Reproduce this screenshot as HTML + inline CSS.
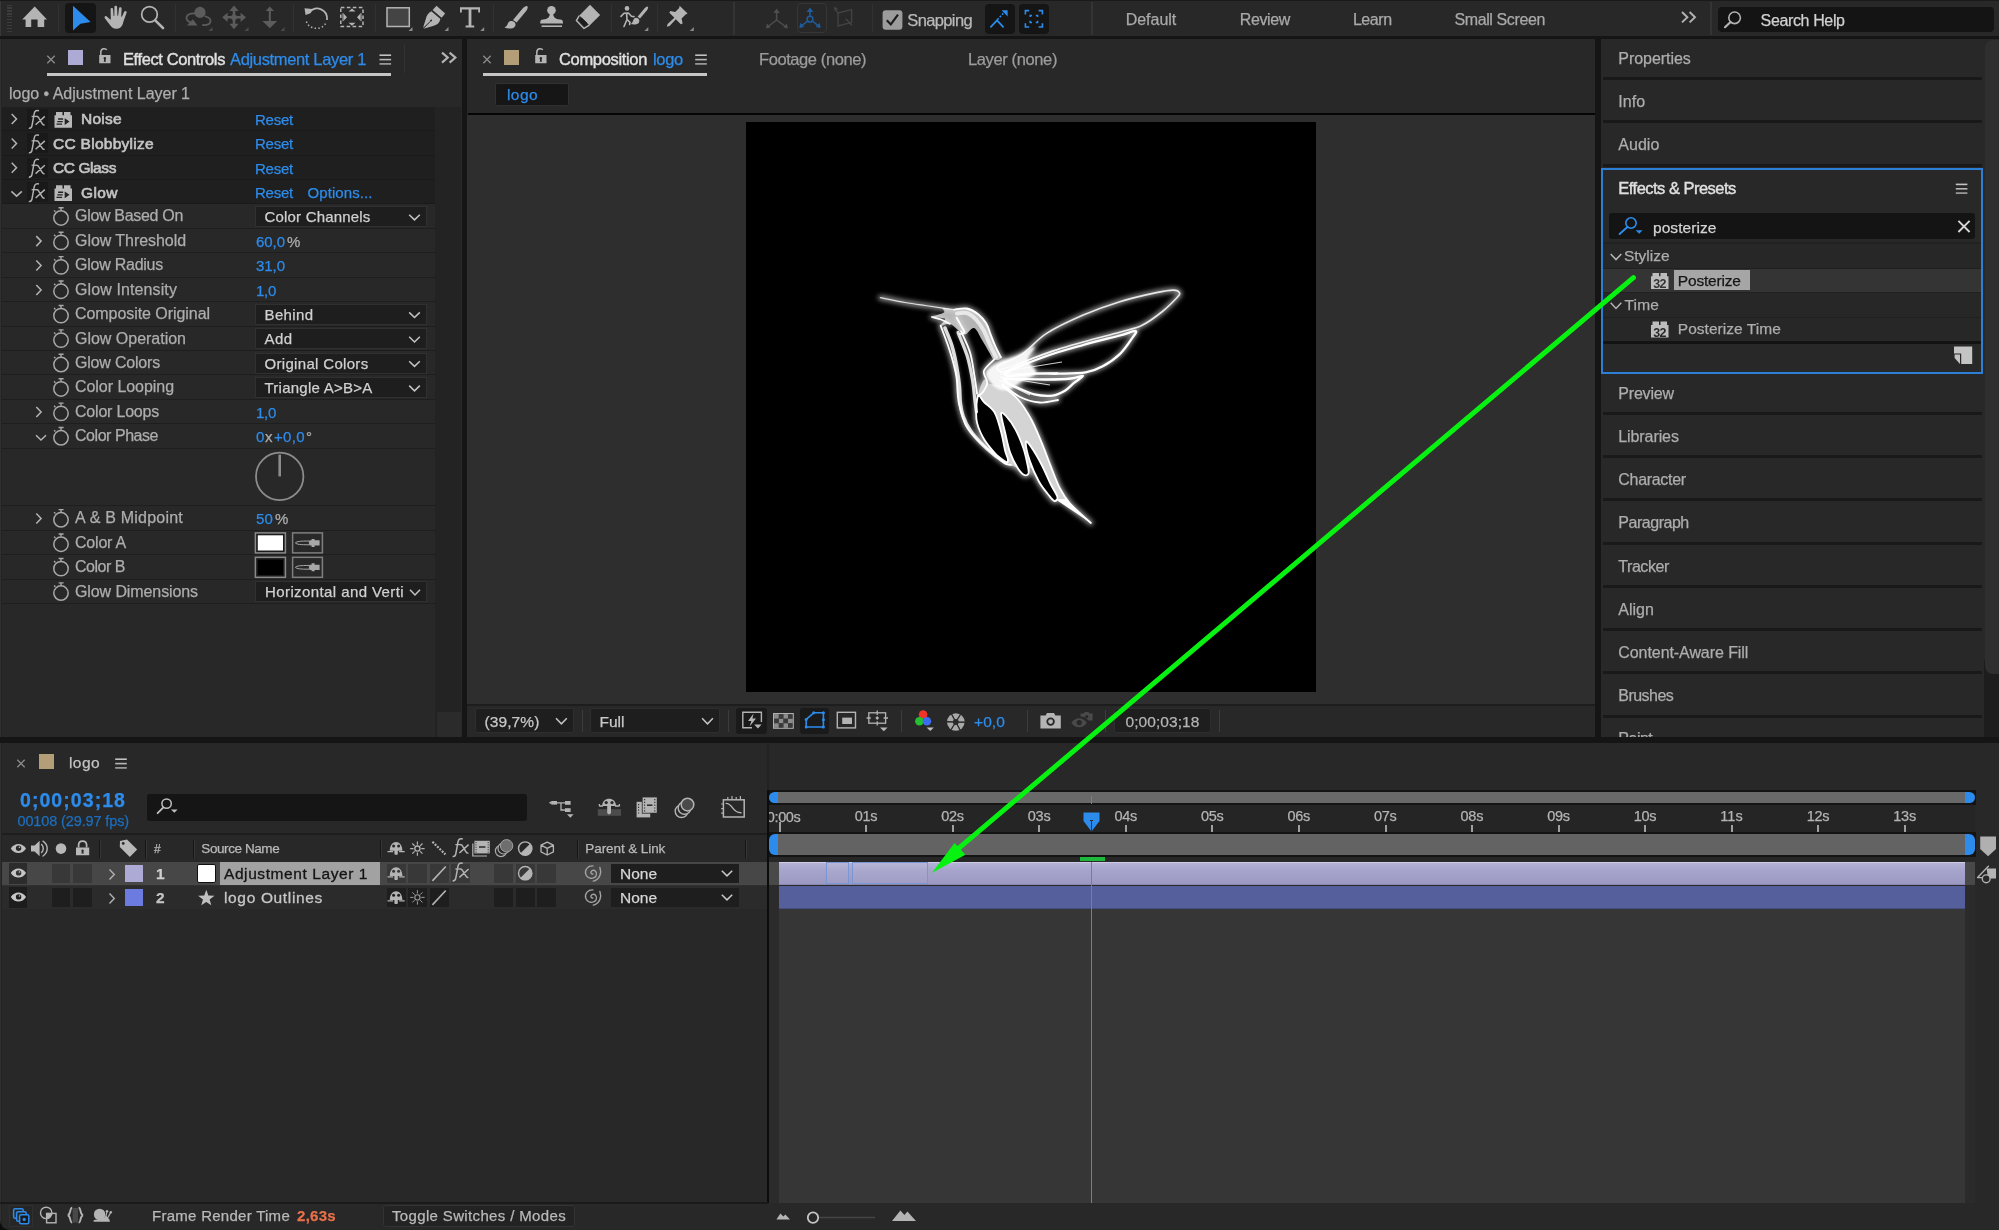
<!DOCTYPE html>
<html><head><meta charset="utf-8"><title>AE</title>
<style>
html,body{margin:0;padding:0;background:#151515;}
body{width:1999px;height:1230px;position:relative;overflow:hidden;font-family:"Liberation Sans", sans-serif;}
#w>div,#w>span,#w>svg{position:absolute;display:block;}
span{white-space:pre;-webkit-text-stroke:0.25px;}
#w{position:absolute;left:0;top:0;width:1999px;height:1230px;will-change:transform;}
svg{overflow:visible;}
</style></head><body><div id="w">
<div style="left:0px;top:0px;width:1999px;height:36px;background:#282828;"></div>
<div style="left:0px;top:0px;width:1999px;height:1px;background:#1a1a1a;"></div>
<div style="left:0px;top:39px;width:462px;height:699px;background:#282828;"></div>
<div style="left:467px;top:39px;width:1128px;height:699px;background:#282828;"></div>
<div style="left:1600px;top:39px;width:399px;height:699px;background:#282828;"></div>
<div style="left:0px;top:743px;width:1999px;height:487px;background:#282828;"></div>
<div style="left:68px;top:50px;width:15px;height:15px;background:#aeaad6;"></div>
<span style="left:123px;top:50.83px;font-size:16.5px;line-height:16.5px;color:#e0e0e0;letter-spacing:-0.395px;-webkit-text-stroke:0.4px;">Effect Controls</span>
<span style="left:230px;top:50.83px;font-size:16.5px;line-height:16.5px;color:#2d8ceb;letter-spacing:-0.343px;">Adjustment Layer 1</span>
<div style="left:47px;top:73px;width:344px;height:3px;background:#c6c6c6;"></div>
<div style="left:404px;top:45px;width:1px;height:28px;background:#333;"></div>
<span style="left:9px;top:85.76px;font-size:16px;line-height:16px;color:#adadad;letter-spacing:-0.029px;">logo • Adjustment Layer 1</span>
<div style="left:0px;top:107px;width:435px;height:24px;background:#1f1f1f;"></div>
<div style="left:0px;top:130px;width:435px;height:1px;background:#1a1a1a;"></div>
<div style="left:0px;top:131px;width:435px;height:25px;background:#1f1f1f;"></div>
<div style="left:0px;top:155px;width:435px;height:1px;background:#1a1a1a;"></div>
<div style="left:0px;top:156px;width:435px;height:24px;background:#1f1f1f;"></div>
<div style="left:0px;top:179px;width:435px;height:1px;background:#1a1a1a;"></div>
<div style="left:0px;top:180px;width:435px;height:24px;background:#1f1f1f;"></div>
<div style="left:0px;top:203px;width:435px;height:1px;background:#1a1a1a;"></div>
<div style="left:435px;top:107px;width:26px;height:631px;background:#232323;"></div>
<div style="left:437px;top:712px;width:24px;height:26px;background:#2b2b2b;"></div>
<div style="left:27px;top:109px;width:21px;height:20px;background:#191919;"></div>
<span style="left:81px;top:111.39px;font-size:15.5px;line-height:15.5px;color:#c3c3c3;letter-spacing:0.272px;-webkit-text-stroke:0.65px;">Noise</span>
<span style="left:255px;top:111.81px;font-size:15px;line-height:15px;color:#2d8ceb;letter-spacing:-0.237px;">Reset</span>
<div style="left:27px;top:133px;width:21px;height:20px;background:#191919;"></div>
<span style="left:53px;top:135.81px;font-size:15.5px;line-height:15.5px;color:#c3c3c3;letter-spacing:0.280px;-webkit-text-stroke:0.65px;">CC Blobbylize</span>
<span style="left:255px;top:136.23px;font-size:15px;line-height:15px;color:#2d8ceb;letter-spacing:-0.237px;">Reset</span>
<div style="left:27px;top:158px;width:21px;height:20px;background:#191919;"></div>
<span style="left:53px;top:160.23px;font-size:15.5px;line-height:15.5px;color:#c3c3c3;letter-spacing:-0.416px;-webkit-text-stroke:0.65px;">CC Glass</span>
<span style="left:255px;top:160.65px;font-size:15px;line-height:15px;color:#2d8ceb;letter-spacing:-0.237px;">Reset</span>
<div style="left:27px;top:182px;width:21px;height:20px;background:#191919;"></div>
<span style="left:81px;top:184.65px;font-size:15.5px;line-height:15.5px;color:#c3c3c3;letter-spacing:0.418px;-webkit-text-stroke:0.65px;">Glow</span>
<span style="left:255px;top:185.07px;font-size:15px;line-height:15px;color:#2d8ceb;letter-spacing:-0.237px;">Reset</span>
<span style="left:307.5px;top:185.07px;font-size:15px;line-height:15px;color:#2d8ceb;letter-spacing:0.080px;">Options...</span>
<div style="left:0px;top:228px;width:435px;height:1px;background:#1e1e1e;"></div>
<span style="left:75px;top:208.45px;font-size:16px;line-height:16px;color:#adadad;letter-spacing:-0.312px;">Glow Based On</span>
<div style="left:255px;top:206px;width:172px;height:21px;background:#1e1e1e;border:1px solid #303030;box-sizing:border-box;"></div>
<span style="left:264.5px;top:209.29px;font-size:15px;line-height:15px;color:#d0d0d0;letter-spacing:0.186px;">Color Channels</span>
<div style="left:0px;top:252px;width:435px;height:1px;background:#1e1e1e;"></div>
<span style="left:75px;top:232.87px;font-size:16px;line-height:16px;color:#adadad;letter-spacing:-0.055px;">Glow Threshold</span>
<span style="left:256px;top:233.71px;font-size:15px;line-height:15px;color:#2d8ceb;letter-spacing:-0.051px;">60,0</span>
<span style="left:287px;top:233.71px;font-size:15px;line-height:15px;color:#adadad;letter-spacing:-1.344px;">%</span>
<div style="left:0px;top:277px;width:435px;height:1px;background:#1e1e1e;"></div>
<span style="left:75px;top:257.29px;font-size:16px;line-height:16px;color:#adadad;letter-spacing:-0.246px;">Glow Radius</span>
<span style="left:256px;top:258.13px;font-size:15px;line-height:15px;color:#2d8ceb;letter-spacing:-0.051px;">31,0</span>
<div style="left:0px;top:301px;width:435px;height:1px;background:#1e1e1e;"></div>
<span style="left:75px;top:281.71px;font-size:16px;line-height:16px;color:#adadad;letter-spacing:0.108px;">Glow Intensity</span>
<span style="left:256px;top:282.55px;font-size:15px;line-height:15px;color:#2d8ceb;letter-spacing:-0.286px;">1,0</span>
<div style="left:0px;top:326px;width:435px;height:1px;background:#1e1e1e;"></div>
<span style="left:75px;top:306.13px;font-size:16px;line-height:16px;color:#adadad;letter-spacing:-0.059px;">Composite Original</span>
<div style="left:255px;top:304px;width:172px;height:21px;background:#1e1e1e;border:1px solid #303030;box-sizing:border-box;"></div>
<span style="left:264.5px;top:306.97px;font-size:15px;line-height:15px;color:#d0d0d0;letter-spacing:0.380px;">Behind</span>
<div style="left:0px;top:350px;width:435px;height:1px;background:#1e1e1e;"></div>
<span style="left:75px;top:330.55px;font-size:16px;line-height:16px;color:#adadad;letter-spacing:-0.012px;">Glow Operation</span>
<div style="left:255px;top:328px;width:172px;height:21px;background:#1e1e1e;border:1px solid #303030;box-sizing:border-box;"></div>
<span style="left:264.5px;top:331.39px;font-size:15px;line-height:15px;color:#d0d0d0;letter-spacing:0.432px;">Add</span>
<div style="left:0px;top:374px;width:435px;height:1px;background:#1e1e1e;"></div>
<span style="left:75px;top:354.97px;font-size:16px;line-height:16px;color:#adadad;letter-spacing:-0.195px;">Glow Colors</span>
<div style="left:255px;top:353px;width:172px;height:21px;background:#1e1e1e;border:1px solid #303030;box-sizing:border-box;"></div>
<span style="left:264.5px;top:355.81px;font-size:15px;line-height:15px;color:#d0d0d0;letter-spacing:0.320px;">Original Colors</span>
<div style="left:0px;top:399px;width:435px;height:1px;background:#1e1e1e;"></div>
<span style="left:75px;top:379.39px;font-size:16px;line-height:16px;color:#adadad;letter-spacing:-0.048px;">Color Looping</span>
<div style="left:255px;top:377px;width:172px;height:21px;background:#1e1e1e;border:1px solid #303030;box-sizing:border-box;"></div>
<span style="left:264.5px;top:380.23px;font-size:15px;line-height:15px;color:#d0d0d0;letter-spacing:0.249px;">Triangle A>B>A</span>
<div style="left:0px;top:423px;width:435px;height:1px;background:#1e1e1e;"></div>
<span style="left:75px;top:403.81px;font-size:16px;line-height:16px;color:#adadad;letter-spacing:-0.207px;">Color Loops</span>
<span style="left:256px;top:404.65px;font-size:15px;line-height:15px;color:#2d8ceb;letter-spacing:-0.286px;">1,0</span>
<div style="left:0px;top:448px;width:435px;height:1px;background:#1e1e1e;"></div>
<span style="left:75px;top:428.23px;font-size:16px;line-height:16px;color:#adadad;letter-spacing:-0.459px;">Color Phase</span>
<span style="left:256px;top:429.07px;font-size:15px;line-height:15px;color:#2d8ceb;letter-spacing:-0.344px;">0</span>
<span style="left:265px;top:429.07px;font-size:15px;line-height:15px;color:#adadad;letter-spacing:0.500px;">x</span>
<span style="left:274px;top:429.07px;font-size:15px;line-height:15px;color:#2d8ceb;letter-spacing:0.344px;">+0,0</span>
<span style="left:306px;top:429.07px;font-size:15px;line-height:15px;color:#adadad;">°</span>
<div style="left:0px;top:505px;width:435px;height:1px;background:#1e1e1e;"></div>
<div style="left:0px;top:530px;width:435px;height:1px;background:#1e1e1e;"></div>
<span style="left:75px;top:510.25px;font-size:16px;line-height:16px;color:#adadad;letter-spacing:0.218px;">A &amp; B Midpoint</span>
<span style="left:256px;top:511.09px;font-size:15px;line-height:15px;color:#2d8ceb;letter-spacing:0.156px;">50</span>
<span style="left:275px;top:511.09px;font-size:15px;line-height:15px;color:#adadad;letter-spacing:-1.344px;">%</span>
<div style="left:0px;top:554px;width:435px;height:1px;background:#1e1e1e;"></div>
<span style="left:75px;top:534.67px;font-size:16px;line-height:16px;color:#adadad;letter-spacing:-0.210px;">Color A</span>
<div style="left:0px;top:579px;width:435px;height:1px;background:#1e1e1e;"></div>
<span style="left:75px;top:559.09px;font-size:16px;line-height:16px;color:#adadad;letter-spacing:-0.480px;">Color B</span>
<div style="left:0px;top:603px;width:435px;height:1px;background:#1e1e1e;"></div>
<span style="left:75px;top:583.51px;font-size:16px;line-height:16px;color:#adadad;letter-spacing:-0.099px;">Glow Dimensions</span>
<div style="left:255px;top:581px;width:172px;height:21px;background:#1e1e1e;border:1px solid #303030;box-sizing:border-box;"></div>
<span style="left:265px;top:584.35px;font-size:15px;line-height:15px;color:#d0d0d0;letter-spacing:0.405px;">Horizontal and Verti</span>
<div style="left:1595px;top:39px;width:5px;height:699px;background:#151515;"></div>
<div style="left:504px;top:50px;width:15px;height:15px;background:#b39e78;"></div>
<span style="left:559px;top:50.83px;font-size:16.5px;line-height:16.5px;color:#e0e0e0;letter-spacing:-0.338px;-webkit-text-stroke:0.4px;">Composition</span>
<span style="left:653px;top:50.83px;font-size:16.5px;line-height:16.5px;color:#2d8ceb;letter-spacing:-0.301px;">logo</span>
<div style="left:483px;top:73px;width:224px;height:3px;background:#c6c6c6;"></div>
<span style="left:759px;top:50.83px;font-size:16.5px;line-height:16.5px;color:#9c9c9c;letter-spacing:-0.416px;">Footage (none)</span>
<span style="left:968px;top:50.83px;font-size:16.5px;line-height:16.5px;color:#9c9c9c;letter-spacing:-0.380px;">Layer (none)</span>
<div style="left:495px;top:83px;width:74px;height:23px;background:#161616;border:1px solid #303030;box-sizing:border-box;border-radius:2px;"></div>
<span style="left:507px;top:86.88px;font-size:15.5px;line-height:15.5px;color:#2d8ceb;letter-spacing:0.422px;">logo</span>
<div style="left:468px;top:113px;width:1127px;height:2px;background:#050505;"></div>
<div style="left:467px;top:115px;width:1128px;height:589px;background:#2e2e2e;"></div>
<div style="left:746px;top:122px;width:570px;height:570px;background:#000;"></div>
<div style="left:467px;top:704px;width:1128px;height:2px;background:#1d1d1d;"></div>
<div style="left:475px;top:708px;width:99px;height:25px;background:#1e1e1e;border:1px solid #2e2e2e;box-sizing:border-box;border-radius:3px;"></div>
<span style="left:484.5px;top:714.18px;font-size:15.5px;line-height:15.5px;color:#c8c8c8;letter-spacing:0.103px;">(39,7%)</span>
<div style="left:582px;top:710px;width:1px;height:22px;background:#3c3c3c;"></div>
<div style="left:590px;top:708px;width:130px;height:25px;background:#1e1e1e;border:1px solid #2e2e2e;box-sizing:border-box;border-radius:3px;"></div>
<span style="left:599.5px;top:714.18px;font-size:15.5px;line-height:15.5px;color:#c8c8c8;letter-spacing:0.004px;">Full</span>
<div style="left:728px;top:710px;width:1px;height:22px;background:#3c3c3c;"></div>
<div style="left:736px;top:708px;width:31px;height:26px;background:#1a1a1a;border-radius:3px;"></div>
<div style="left:800px;top:708px;width:29px;height:26px;background:#1a1a1a;border-radius:3px;"></div>
<div style="left:901px;top:710px;width:1px;height:22px;background:#3c3c3c;"></div>
<span style="left:974px;top:714.18px;font-size:15.5px;line-height:15.5px;color:#2d8ceb;letter-spacing:0.098px;">+0,0</span>
<div style="left:1027px;top:710px;width:1px;height:22px;background:#3c3c3c;"></div>
<div style="left:1105px;top:710px;width:1px;height:22px;background:#3c3c3c;"></div>
<div style="left:1114px;top:708px;width:97px;height:25px;background:#1e1e1e;border:1px solid #2e2e2e;box-sizing:border-box;border-radius:3px;"></div>
<span style="left:1125.5px;top:714.18px;font-size:15.5px;line-height:15.5px;color:#b4b4b4;letter-spacing:0.073px;">0;00;03;18</span>
<div style="left:1219px;top:710px;width:1px;height:22px;background:#3c3c3c;"></div>
<div style="left:1600px;top:39px;width:1px;height:699px;background:#151515;"></div>
<div style="left:1984px;top:660px;width:15px;height:78px;background:#1d1d1d;"></div>
<div style="left:1984.5px;top:40px;width:15px;height:634px;background:#2f2f2f;border-radius:8px 0 0 8px;"></div>
<span style="left:1618.3px;top:50.56px;font-size:16px;line-height:16px;color:#adadad;letter-spacing:-0.042px;">Properties</span>
<div style="left:1603px;top:77px;width:379px;height:3px;background:#191919;"></div>
<span style="left:1618.3px;top:93.76px;font-size:16px;line-height:16px;color:#adadad;letter-spacing:0.078px;">Info</span>
<div style="left:1603px;top:120px;width:379px;height:3px;background:#191919;"></div>
<span style="left:1618.3px;top:136.96px;font-size:16px;line-height:16px;color:#adadad;letter-spacing:0.016px;">Audio</span>
<div style="left:1603px;top:164px;width:379px;height:3px;background:#191919;"></div>
<div style="left:1601px;top:168px;width:382px;height:206px;background:#282828;border:2px solid #2d7fd6;box-sizing:border-box;"></div>
<span style="left:1618.3px;top:180.03px;font-size:16.5px;line-height:16.5px;color:#e0e0e0;letter-spacing:-0.515px;-webkit-text-stroke:0.4px;">Effects &amp; Presets</span>
<div style="left:1609px;top:213px;width:366px;height:26px;background:#141414;border-radius:3px;"></div>
<span style="left:1653px;top:219.58px;font-size:15.5px;line-height:15.5px;color:#d4d4d4;letter-spacing:0.066px;">posterize</span>
<div style="left:1603px;top:242px;width:378px;height:2px;background:#222222;"></div>
<div style="left:1603px;top:244px;width:378px;height:24px;background:#272727;"></div>
<div style="left:1603px;top:268px;width:378px;height:1px;background:#202020;"></div>
<div style="left:1603px;top:269px;width:378px;height:23px;background:#343434;"></div>
<div style="left:1603px;top:292px;width:378px;height:1px;background:#202020;"></div>
<div style="left:1603px;top:293px;width:378px;height:24px;background:#272727;"></div>
<div style="left:1603px;top:317px;width:378px;height:1px;background:#202020;"></div>
<div style="left:1603px;top:318px;width:378px;height:24px;background:#272727;"></div>
<div style="left:1603px;top:341px;width:378px;height:3px;background:#131313;"></div>
<span style="left:1624px;top:248.38px;font-size:15.5px;line-height:15.5px;color:#adadad;letter-spacing:-0.022px;">Stylize</span>
<div style="left:1674px;top:270px;width:76px;height:20px;background:#a6a6a6;"></div>
<span style="left:1677.8px;top:272.68px;font-size:15.5px;line-height:15.5px;color:#161616;letter-spacing:-0.181px;">Posterize</span>
<span style="left:1624.5px;top:296.88px;font-size:15.5px;line-height:15.5px;color:#adadad;letter-spacing:0.156px;">Time</span>
<span style="left:1677.8px;top:321.38px;font-size:15.5px;line-height:15.5px;color:#adadad;letter-spacing:0.035px;">Posterize Time</span>
<span style="left:1618.3px;top:385.66px;font-size:16px;line-height:16px;color:#adadad;letter-spacing:-0.201px;">Preview</span>
<div style="left:1603px;top:412px;width:379px;height:3px;background:#191919;"></div>
<span style="left:1618.3px;top:428.88px;font-size:16px;line-height:16px;color:#adadad;letter-spacing:-0.095px;">Libraries</span>
<div style="left:1603px;top:455px;width:379px;height:3px;background:#191919;"></div>
<span style="left:1618.3px;top:472.10px;font-size:16px;line-height:16px;color:#adadad;letter-spacing:-0.306px;">Character</span>
<div style="left:1603px;top:498px;width:379px;height:3px;background:#191919;"></div>
<span style="left:1618.3px;top:515.32px;font-size:16px;line-height:16px;color:#adadad;letter-spacing:-0.469px;">Paragraph</span>
<div style="left:1603px;top:542px;width:379px;height:3px;background:#191919;"></div>
<span style="left:1618.3px;top:558.54px;font-size:16px;line-height:16px;color:#adadad;letter-spacing:-0.449px;">Tracker</span>
<div style="left:1603px;top:585px;width:379px;height:3px;background:#191919;"></div>
<span style="left:1618.3px;top:601.76px;font-size:16px;line-height:16px;color:#adadad;letter-spacing:-0.016px;">Align</span>
<div style="left:1603px;top:628px;width:379px;height:3px;background:#191919;"></div>
<span style="left:1618.3px;top:644.98px;font-size:16px;line-height:16px;color:#adadad;letter-spacing:-0.073px;">Content-Aware Fill</span>
<div style="left:1603px;top:671px;width:379px;height:3px;background:#191919;"></div>
<span style="left:1618.3px;top:688.20px;font-size:16px;line-height:16px;color:#adadad;letter-spacing:-0.529px;">Brushes</span>
<div style="left:1603px;top:715px;width:379px;height:3px;background:#191919;"></div>
<span style="left:1618.3px;top:731.42px;font-size:16px;line-height:16px;color:#adadad;letter-spacing:-0.494px;">Paint</span>
<div style="left:0px;top:737px;width:1999px;height:6px;background:#151515;"></div>
<div style="left:0px;top:743px;width:1999px;height:487px;background:#282828;"></div>
<div style="left:39px;top:754px;width:15px;height:15px;background:#b39e78;"></div>
<span style="left:69px;top:755.18px;font-size:15.5px;line-height:15.5px;color:#c4c4c4;letter-spacing:0.422px;">logo</span>
<span style="left:20px;top:791.29px;font-size:19.5px;line-height:19.5px;color:#2d8ceb;font-weight:700;letter-spacing:1.059px;">0;00;03;18</span>
<span style="left:17.5px;top:814.23px;font-size:14.5px;line-height:14.5px;color:#1c6fbd;letter-spacing:-0.128px;">00108 (29.97 fps)</span>
<div style="left:147px;top:794px;width:380px;height:27px;background:#151515;border-radius:3px;"></div>
<div style="left:0px;top:833px;width:768px;height:2px;background:#1d1d1d;"></div>
<div style="left:99px;top:841px;width:1px;height:16px;background:#1a1a1a;"></div>
<div style="left:100px;top:841px;width:1px;height:16px;background:#3a3a3a;"></div>
<div style="left:99px;top:840px;width:1px;height:18px;background:#161616;"></div>
<div style="left:100px;top:840px;width:1px;height:18px;background:#363636;"></div>
<div style="left:145px;top:840px;width:1px;height:18px;background:#161616;"></div>
<div style="left:146px;top:840px;width:1px;height:18px;background:#363636;"></div>
<div style="left:193px;top:840px;width:1px;height:18px;background:#161616;"></div>
<div style="left:194px;top:840px;width:1px;height:18px;background:#363636;"></div>
<div style="left:380px;top:840px;width:1px;height:18px;background:#161616;"></div>
<div style="left:381px;top:840px;width:1px;height:18px;background:#363636;"></div>
<div style="left:577px;top:840px;width:1px;height:18px;background:#161616;"></div>
<div style="left:578px;top:840px;width:1px;height:18px;background:#363636;"></div>
<div style="left:745px;top:840px;width:1px;height:18px;background:#161616;"></div>
<div style="left:746px;top:840px;width:1px;height:18px;background:#363636;"></div>
<span style="left:154px;top:842.84px;font-size:12px;line-height:12px;color:#b9b9b9;">#</span>
<span style="left:201.3px;top:841.97px;font-size:13.5px;line-height:13.5px;color:#b9b9b9;letter-spacing:-0.413px;">Source Name</span>
<span style="left:585.3px;top:841.97px;font-size:13.5px;line-height:13.5px;color:#b9b9b9;letter-spacing:-0.081px;">Parent &amp; Link</span>
<div style="left:0px;top:862px;width:768px;height:23px;background:#474747;"></div>
<div style="left:9px;top:863px;width:18px;height:21px;background:#2c2c2c;"></div>
<div style="left:52px;top:864px;width:18px;height:19px;background:#383838;"></div>
<div style="left:73px;top:864px;width:19px;height:19px;background:#383838;"></div>
<div style="left:125px;top:865px;width:18px;height:17px;background:#aeaad6;"></div>
<span style="left:156px;top:866.38px;font-size:15.5px;line-height:15.5px;color:#d0d0d0;font-weight:700;">1</span>
<div style="left:220px;top:862px;width:160px;height:23px;background:#a2a2a2;"></div>
<span style="left:224px;top:866.18px;font-size:15.5px;line-height:15.5px;color:#141414;letter-spacing:0.581px;-webkit-text-stroke:0.3px #141414;">Adjustment Layer 1</span>
<div style="left:386.5px;top:864px;width:19px;height:19px;background:#383838;"></div>
<div style="left:408px;top:864px;width:19px;height:19px;background:#383838;"></div>
<div style="left:429.5px;top:864px;width:19px;height:19px;background:#383838;"></div>
<div style="left:451px;top:864px;width:19px;height:19px;background:#383838;"></div>
<div style="left:494px;top:864px;width:19px;height:19px;background:#383838;"></div>
<div style="left:515.7px;top:864px;width:19px;height:19px;background:#383838;"></div>
<div style="left:537.2px;top:864px;width:19px;height:19px;background:#383838;"></div>
<div style="left:611px;top:864px;width:128px;height:19px;background:#1e1e1e;"></div>
<span style="left:620px;top:866.38px;font-size:15.5px;line-height:15.5px;color:#d6d6d6;letter-spacing:-0.016px;">None</span>
<div style="left:0px;top:886px;width:768px;height:23px;background:#2b2b2b;"></div>
<div style="left:9px;top:887px;width:18px;height:21px;background:#1c1c1c;"></div>
<div style="left:52px;top:888px;width:18px;height:19px;background:#1e1e1e;"></div>
<div style="left:73px;top:888px;width:19px;height:19px;background:#1e1e1e;"></div>
<div style="left:125px;top:889px;width:18px;height:17px;background:#6b7be0;"></div>
<span style="left:156px;top:890.38px;font-size:15.5px;line-height:15.5px;color:#c4c4c4;font-weight:700;">2</span>
<span style="left:224px;top:890.18px;font-size:15.5px;line-height:15.5px;color:#c6c6c6;letter-spacing:0.655px;-webkit-text-stroke:0.3px #c6c6c6;">logo Outlines</span>
<div style="left:386.5px;top:888px;width:19px;height:19px;background:#1e1e1e;"></div>
<div style="left:408px;top:888px;width:19px;height:19px;background:#1e1e1e;"></div>
<div style="left:429.5px;top:888px;width:19px;height:19px;background:#1e1e1e;"></div>
<div style="left:494px;top:888px;width:19px;height:19px;background:#1e1e1e;"></div>
<div style="left:515.7px;top:888px;width:19px;height:19px;background:#1e1e1e;"></div>
<div style="left:537.2px;top:888px;width:19px;height:19px;background:#1e1e1e;"></div>
<div style="left:611px;top:888px;width:128px;height:19px;background:#1e1e1e;"></div>
<span style="left:620px;top:890.38px;font-size:15.5px;line-height:15.5px;color:#d6d6d6;letter-spacing:-0.016px;">None</span>
<div style="left:0px;top:885px;width:768px;height:1px;background:#303030;"></div>
<div style="left:197px;top:864px;width:19px;height:19px;background:#fff;border:1px solid #111;box-sizing:border-box;border-radius:2px;"></div>
<div style="left:0px;top:743px;width:1px;height:487px;background:#303030;"></div>
<div style="left:1px;top:743px;width:1px;height:487px;background:#232323;"></div>
<div style="left:767px;top:743px;width:2px;height:47px;background:#222222;"></div>
<div style="left:767px;top:790px;width:2px;height:413px;background:#0c0c0c;"></div>
<div style="left:769px;top:786px;width:1230px;height:417px;background:#282828;"></div>
<div style="left:769px;top:790px;width:1207px;height:15px;background:#141414;"></div>
<div style="left:778px;top:792px;width:1187px;height:11px;background:#696969;"></div>
<div style="left:769px;top:805px;width:1206px;height:27px;background:#252525;"></div>
<div style="left:779px;top:822px;width:2px;height:10px;background:#a0a0a0;"></div>
<div style="left:769px;top:806px;width:33px;height:19px;background:transparent;overflow:hidden;"><span style="position:absolute;right:1.5px;top:2.5px;font-size:14.5px;line-height:16px;color:#b4b4b4;letter-spacing:-0.35px">0:00s</span></div>
<div style="left:865px;top:825px;width:2px;height:7px;background:#a0a0a0;"></div>
<span style="left:854.75px;top:808.53px;font-size:14.5px;line-height:14.5px;color:#b4b4b4;letter-spacing:-0.297px;">01s</span>
<div style="left:952px;top:825px;width:2px;height:7px;background:#a0a0a0;"></div>
<span style="left:941.3000000000001px;top:808.53px;font-size:14.5px;line-height:14.5px;color:#b4b4b4;letter-spacing:-0.297px;">02s</span>
<div style="left:1038px;top:825px;width:2px;height:7px;background:#a0a0a0;"></div>
<span style="left:1027.85px;top:808.53px;font-size:14.5px;line-height:14.5px;color:#b4b4b4;letter-spacing:-0.297px;">03s</span>
<div style="left:1125px;top:825px;width:2px;height:7px;background:#a0a0a0;"></div>
<span style="left:1114.4px;top:808.53px;font-size:14.5px;line-height:14.5px;color:#b4b4b4;letter-spacing:-0.297px;">04s</span>
<div style="left:1211px;top:825px;width:2px;height:7px;background:#a0a0a0;"></div>
<span style="left:1200.95px;top:808.53px;font-size:14.5px;line-height:14.5px;color:#b4b4b4;letter-spacing:-0.297px;">05s</span>
<div style="left:1298px;top:825px;width:2px;height:7px;background:#a0a0a0;"></div>
<span style="left:1287.5px;top:808.53px;font-size:14.5px;line-height:14.5px;color:#b4b4b4;letter-spacing:-0.297px;">06s</span>
<div style="left:1385px;top:825px;width:2px;height:7px;background:#a0a0a0;"></div>
<span style="left:1374.0500000000002px;top:808.53px;font-size:14.5px;line-height:14.5px;color:#b4b4b4;letter-spacing:-0.297px;">07s</span>
<div style="left:1471px;top:825px;width:2px;height:7px;background:#a0a0a0;"></div>
<span style="left:1460.6px;top:808.53px;font-size:14.5px;line-height:14.5px;color:#b4b4b4;letter-spacing:-0.297px;">08s</span>
<div style="left:1558px;top:825px;width:2px;height:7px;background:#a0a0a0;"></div>
<span style="left:1547.15px;top:808.53px;font-size:14.5px;line-height:14.5px;color:#b4b4b4;letter-spacing:-0.297px;">09s</span>
<div style="left:1644px;top:825px;width:2px;height:7px;background:#a0a0a0;"></div>
<span style="left:1633.7px;top:808.53px;font-size:14.5px;line-height:14.5px;color:#b4b4b4;letter-spacing:-0.297px;">10s</span>
<div style="left:1731px;top:825px;width:2px;height:7px;background:#a0a0a0;"></div>
<span style="left:1720.25px;top:808.53px;font-size:14.5px;line-height:14.5px;color:#b4b4b4;letter-spacing:0.062px;">11s</span>
<div style="left:1817px;top:825px;width:2px;height:7px;background:#a0a0a0;"></div>
<span style="left:1806.8px;top:808.53px;font-size:14.5px;line-height:14.5px;color:#b4b4b4;letter-spacing:-0.297px;">12s</span>
<div style="left:1904px;top:825px;width:2px;height:7px;background:#a0a0a0;"></div>
<span style="left:1893.35px;top:808.53px;font-size:14.5px;line-height:14.5px;color:#b4b4b4;letter-spacing:-0.297px;">13s</span>
<div style="left:769px;top:832px;width:1207px;height:25px;background:#141414;"></div>
<div style="left:778px;top:834px;width:1187px;height:21px;background:#636363;"></div>
<div style="left:769px;top:857px;width:1206px;height:346px;background:#363636;"></div>
<div style="left:769px;top:857px;width:10px;height:346px;background:#2b2b2b;"></div>
<div style="left:769px;top:862px;width:10px;height:23px;background:#494949;"></div>
<div style="left:769px;top:857px;width:1206px;height:5px;background:#272727;"></div>
<div style="left:1965px;top:857px;width:10px;height:346px;background:#2b2b2b;"></div>
<div style="left:1965px;top:862px;width:10px;height:23px;background:#494949;"></div>
<div style="left:1965px;top:857px;width:10px;height:5px;background:#272727;"></div>
<div style="left:779px;top:862px;width:1186px;height:23px;background:linear-gradient(#b4b2d6,#a7a4cc 35%,#9b98c2);border-top:1px solid #cdcbe6;border-bottom:1px solid #8a87b0;box-sizing:border-box;"></div>
<div style="left:779px;top:886px;width:1186px;height:23px;background:#545f9b;border-bottom:1px solid #454e80;box-sizing:border-box;"></div>
<div style="left:769px;top:885px;width:1206px;height:1px;background:#2a2a2a;"></div>
<div style="left:825.5px;top:862px;width:23px;height:22px;background:rgba(255,255,255,0.05);border:1.5px solid #7a96d4;box-sizing:border-box;"></div>
<div style="left:852px;top:862px;width:76px;height:22px;background:rgba(255,255,255,0.05);border:1.5px solid #7a96d4;box-sizing:border-box;"></div>
<div style="left:1080px;top:857px;width:25px;height:4px;background:#1eb83c;"></div>
<div style="left:769px;top:792px;width:9px;height:11px;background:#2d8ceb;border-radius:6px 0 0 6px;"></div>
<div style="left:1965px;top:792px;width:10px;height:11px;background:#2d8ceb;border-radius:0 6px 6px 0;"></div>
<div style="left:769px;top:834px;width:9px;height:21px;background:#2d8ceb;border-radius:6px 0 0 6px;"></div>
<div style="left:1965px;top:834px;width:10px;height:21px;background:#2d8ceb;border-radius:0 6px 6px 0;"></div>
<div style="left:1091px;top:862px;width:1px;height:341px;background:#3b8de0;"></div>
<div style="left:1091px;top:796px;width:1px;height:8px;background:#3b8de0;"></div>
<svg style="left:1083px;top:812px;" width="17" height="20" viewBox="0 0 17 20"><path d="M0.5 0.5H16.5V9L8.5 19.5L0.5 9Z" fill="#2d8ceb"/><rect x="7" y="8" width="3" height="1" fill="#222"/><rect x="8" y="8" width="1" height="12" fill="#1a3a66"/></svg>
<div style="left:0px;top:1202px;width:768px;height:2px;background:#1a1a1a;"></div>
<div style="left:769px;top:1203px;width:1230px;height:27px;background:#282828;"></div>
<div style="left:10px;top:1207px;width:22px;height:19px;background:#1b1b1b;"></div>
<span style="left:152px;top:1208.30px;font-size:15px;line-height:15px;color:#b9b9b9;letter-spacing:0.272px;">Frame Render Time</span>
<span style="left:297px;top:1208.30px;font-size:15px;line-height:15px;color:#e8714a;font-weight:700;letter-spacing:0.291px;">2,63s</span>
<div style="left:383px;top:1205px;width:192px;height:22px;background:#232323;border:1px solid #333;box-sizing:border-box;border-radius:3px;"></div>
<span style="left:392px;top:1208.30px;font-size:15px;line-height:15px;color:#b9b9b9;letter-spacing:0.351px;">Toggle Switches / Modes</span>
<div style="left:0px;top:1px;width:1px;height:35px;background:#383838;"></div>
<div style="left:7px;top:4.5px;width:5px;height:1.4px;background:#3c3c3c;"></div>
<div style="left:7px;top:7.4px;width:5px;height:1.4px;background:#3c3c3c;"></div>
<div style="left:7px;top:10.3px;width:5px;height:1.4px;background:#3c3c3c;"></div>
<div style="left:7px;top:13.2px;width:5px;height:1.4px;background:#3c3c3c;"></div>
<div style="left:7px;top:16.1px;width:5px;height:1.4px;background:#3c3c3c;"></div>
<div style="left:7px;top:19.0px;width:5px;height:1.4px;background:#3c3c3c;"></div>
<div style="left:7px;top:21.9px;width:5px;height:1.4px;background:#3c3c3c;"></div>
<div style="left:7px;top:24.8px;width:5px;height:1.4px;background:#3c3c3c;"></div>
<div style="left:7px;top:27.7px;width:5px;height:1.4px;background:#3c3c3c;"></div>
<div style="left:7px;top:30.599999999999998px;width:5px;height:1.4px;background:#3c3c3c;"></div>
<div style="left:57.5px;top:4px;width:1px;height:28px;background:#323232;"></div>
<div style="left:175px;top:4px;width:1px;height:28px;background:#323232;"></div>
<div style="left:293px;top:4px;width:1px;height:28px;background:#323232;"></div>
<div style="left:375px;top:4px;width:1px;height:28px;background:#323232;"></div>
<div style="left:493px;top:4px;width:1px;height:28px;background:#323232;"></div>
<div style="left:610.5px;top:4px;width:1px;height:28px;background:#323232;"></div>
<div style="left:656.5px;top:4px;width:1px;height:28px;background:#323232;"></div>
<div style="left:872px;top:4px;width:1px;height:28px;background:#323232;"></div>
<div style="left:733px;top:2px;width:2px;height:33px;background:#343434;"></div>
<div style="left:1091px;top:2px;width:2px;height:33px;background:#343434;"></div>
<div style="left:1710px;top:2px;width:2px;height:33px;background:#343434;"></div>
<div style="left:65px;top:3px;width:31px;height:30px;background:#151515;border-radius:4px;"></div>
<div style="left:796.5px;top:3px;width:30px;height:30px;background:transparent;border:1px solid #363636;box-sizing:border-box;border-radius:4px;"></div>
<div style="left:984.5px;top:4px;width:30px;height:30px;background:#151515;border-radius:4px;"></div>
<div style="left:1019px;top:4px;width:30px;height:30px;background:#151515;border-radius:4px;"></div>
<div style="left:1717.5px;top:7px;width:276px;height:25px;background:#141414;border-radius:4px;"></div>
<span style="left:907.3px;top:12.33px;font-size:16.5px;line-height:16.5px;color:#b9b9b9;letter-spacing:-0.629px;">Snapping</span>
<span style="left:1125.7px;top:12.46px;font-size:16px;line-height:16px;color:#a9a9a9;letter-spacing:-0.015px;">Default</span>
<span style="left:1239.8px;top:12.46px;font-size:16px;line-height:16px;color:#a9a9a9;letter-spacing:-0.395px;">Review</span>
<span style="left:1352.9px;top:12.46px;font-size:16px;line-height:16px;color:#a9a9a9;letter-spacing:-0.424px;">Learn</span>
<span style="left:1454.4px;top:12.46px;font-size:16px;line-height:16px;color:#a9a9a9;letter-spacing:-0.380px;">Small Screen</span>
<span style="left:1760.6px;top:13.26px;font-size:16px;line-height:16px;color:#d0d0d0;letter-spacing:-0.368px;">Search Help</span>
<div style="left:0px;top:39px;width:1px;height:698px;background:#303030;"></div>
<div style="left:1px;top:39px;width:1px;height:698px;background:#232323;"></div>
<div style="left:9px;top:1205px;width:24px;height:22px;background:#262626;border:1px solid #303030;box-sizing:border-box;"></div>
<svg style="left:0;top:0;pointer-events:none" width="1999" height="1230" viewBox="0 0 1999 1230"><path d="M34.7 6.6L47 19.6L44.2 19.6L44.2 27L37.6 27L37.6 19.4L31.2 19.4L31.2 27L25.6 27L25.6 19.6L22.2 19.6Z" fill="#b4b4b4" stroke="none" stroke-width="0" /><path d="M73 5.8L90.6 22L80.4 23.8L73 30.4Z" fill="#2d8ceb" stroke="none" stroke-width="0" /><path d="M110.6 9.2 C110.6 7.6 113 7.6 113.1 9.2 L113.6 16 L114.3 16 L114.4 7 C114.4 5.3 117 5.3 117.1 7 L117.4 15.8 L118.1 15.8 L119 8.2 C119.2 6.6 121.7 6.9 121.6 8.5 L121.2 16.6 L121.9 16.8 L124.3 11.6 C125 10.2 127.2 11.2 126.6 12.7 L123.6 21 C122.6 25 121.4 28.6 117 28.8 C113 29 111.2 27 109.6 24.6 L104.8 18.2 C103.8 16.8 105.6 15.4 106.8 16.4 L110.2 19.6 L110.8 19.4 Z" fill="#b4b4b4" stroke="none" stroke-width="0" /><circle cx="149.5" cy="14.4" r="7.8" fill="none" stroke="#b4b4b4" stroke-width="1.7" /><path d="M155.2 20.4L163 28" fill="none" stroke="#b4b4b4" stroke-width="2.6" stroke-linecap="round" stroke-linejoin="round"/><circle cx="200" cy="12.4" r="5.6" fill="#5c5c5c" stroke="none" stroke-width="0" /><path d="M195 13.5C186 13 183.5 19.5 190.5 22.5" fill="none" stroke="#5c5c5c" stroke-width="1.8" stroke-linecap="round" stroke-linejoin="round"/><path d="M187 25.5L197.5 25.5L192.8 19.2Z" fill="#5c5c5c" stroke="none" stroke-width="0" /><path d="M205.5 16.5C213 18.5 212 25.5 203 25" fill="none" stroke="#5c5c5c" stroke-width="1.8" stroke-linecap="round" stroke-linejoin="round"/><path d="M212.5 31L212.5 27L208.5 31Z" fill="#4a4a4a" stroke="none" stroke-width="0" /><path d="M234 9V26M225.5 17.3H242.5" fill="none" stroke="#5c5c5c" stroke-width="2.6" stroke-linecap="round" stroke-linejoin="round"/><path d="M234 13.2L238.1 17.3L234 21.4L229.9 17.3Z" fill="#5c5c5c" stroke="none" stroke-width="0" /><path d="M234 5.6L238.6 11L229.4 11ZM234 29.2L238.6 23.8L229.4 23.8ZM222.2 17.3L227.6 12.7L227.6 21.9ZM246 17.3L240.6 12.7L240.6 21.9Z" fill="#5c5c5c" stroke="none" stroke-width="0" /><path d="M248.5 31L248.5 27L244.5 31Z" fill="#4a4a4a" stroke="none" stroke-width="0" /><path d="M269.8 10V22" fill="none" stroke="#5c5c5c" stroke-width="2" stroke-linecap="round" stroke-linejoin="round"/><path d="M269.8 6.5L274 11L265.6 11ZM269.8 28.2L277.2 21L262.4 21Z" fill="#5c5c5c" stroke="none" stroke-width="0" /><path d="M284.5 31L284.5 27L280.5 31Z" fill="#4a4a4a" stroke="none" stroke-width="0" /><path d="M309.5 12.5C316 4.5 328 9.5 327 20" fill="none" stroke="#b4b4b4" stroke-width="1.8" stroke-linecap="butt"/><path d="M304.5 8.2L312.8 9L310.5 13.2L305.6 15Z" fill="#b4b4b4" stroke="none" stroke-width="0" /><path d="M306.5 21.5C308.5 30 323 31 326.3 22" fill="none" stroke="#b4b4b4" stroke-width="1.6" stroke-dasharray="1.4 2.3" stroke-linecap="butt"/><path d="M340.8 7.6H363V26.6H340.8Z" fill="none" stroke="#b4b4b4" stroke-width="1.5" stroke-dasharray="3.6 2.4" stroke-linecap="butt"/><path d="M348.5 11.5H355.5L352 8.6ZM348.5 22.8H355.5L352 25.8ZM343.6 13.6V20.8L347 17.2ZM360.4 13.6V20.8L357 17.2Z" fill="#b4b4b4" stroke="none" stroke-width="0" /><path d="M343 13.2V21.2M361 13.2V21.2" fill="none" stroke="#b4b4b4" stroke-width="1" /><rect x="387" y="7.8" width="22.3" height="18.7" rx="0" fill="#444" stroke="#b4b4b4" stroke-width="1.5" /><path d="M412.5 31L412.5 27L408.5 31Z" fill="#8a8a8a" stroke="none" stroke-width="0" /><path d="M436.5 5.8L445.2 13.6L441.6 17.8L432.6 10Z" fill="#b4b4b4" stroke="none" stroke-width="0" /><path d="M431.4 11.2L440.4 19C439.5 23 437 25 433 26L423.6 28.8L430.6 21.4C431.6 21.8 432.6 20.6 431.8 19.8C431 19 429.8 20 430.2 21L423 28L425.8 19C426.6 15 428.6 12.8 431.4 11.2Z" fill="#b4b4b4" stroke="none" stroke-width="0" /><path d="M448.5 31L448.5 27L444.5 31Z" fill="#8a8a8a" stroke="none" stroke-width="0" /><path d="M460 7.2H480V12.6H478.2V9.4H471.4V25.4H474.2V27.4H465.6V25.4H468.6V9.4H461.8V12.6H460Z" fill="#b4b4b4" stroke="none" stroke-width="0" /><path d="M484.2 31L484.2 27L480.2 31Z" fill="#8a8a8a" stroke="none" stroke-width="0" /><path d="M526.6 6C528.6 6.2 527.6 9 526.2 11L516.6 22.6L513 20L522.6 8.6C524 7 525.4 6 526.6 6Z" fill="#b4b4b4" stroke="none" stroke-width="0" /><path d="M512 21C515 21.6 516.4 24 515 26.4C513 29 508 29 504.4 27.6C507 26.4 507.4 24.6 508 23C508.8 21.4 510.4 20.8 512 21Z" fill="#b4b4b4" stroke="none" stroke-width="0" /><circle cx="551.5" cy="10.2" r="4.3" fill="#b4b4b4" stroke="none" stroke-width="0" /><path d="M549.8 13.5H553.2C553.2 17 555 19 560 19.6C562.6 19.8 563 21 563 23.4H540.2C540.2 21 540.6 19.8 543 19.6C548 19 549.8 17 549.8 13.5Z" fill="#b4b4b4" stroke="none" stroke-width="0" /><rect x="541.6" y="25.4" width="20.4" height="1.6" rx="0" fill="#b4b4b4" stroke="none" stroke-width="0" /><path d="M590 4.8L600.2 15L589.6 25.6L579.4 15.4Z" fill="#b4b4b4" stroke="none" stroke-width="0" /><path d="M579 16L576.4 20.6L584 28.4L589 25.4" fill="none" stroke="#b4b4b4" stroke-width="1.5" stroke-linecap="round" stroke-linejoin="round"/><rect x="0" y="0" width="0" height="0" rx="0" fill="#b4b4b4" stroke="none" stroke-width="0" /><path d="M578.6 20.4L581.6 17.4L587.4 23.2L584.4 26.2Z" fill="#1c1c1c" stroke="none" stroke-width="0" /><circle cx="627" cy="8.4" r="2.3" fill="#b4b4b4" stroke="none" stroke-width="0" /><path d="M621 16.4L624 13.2L628.4 13L631.4 16.2L634 16.6M626.6 13.4L627 19.5L624 26.5M627 19.5L630 22.4L629.6 24.5" fill="none" stroke="#b4b4b4" stroke-width="1.6" stroke-linecap="round" stroke-linejoin="round"/><path d="M647.4 6.4C648.8 6.6 648 8.6 647 10.2L640 18.6L637.6 16.8L644.4 8.6C645.6 7.2 646.6 6.4 647.4 6.4Z" fill="#b4b4b4" stroke="none" stroke-width="0" /><path d="M636.6 17.8C639 18.4 640 20.4 639 22.4C637.6 24.6 634 24.8 630.6 24C632.4 23 632.8 21.4 633.4 20C634 18.4 635.2 17.6 636.6 17.8Z" fill="#b4b4b4" stroke="none" stroke-width="0" /><path d="M648.3 31L648.3 27L644.3 31Z" fill="#8a8a8a" stroke="none" stroke-width="0" /><path d="M679.6 5.8L687.6 13.6L685.6 14.4L681.6 18.4L682.6 23.4L680.8 24.2L675.8 19.2L669.6 26L666.8 26.8L667.6 24L674.4 17.8L669.4 12.8L670.2 11L675.2 12L679.2 8Z" fill="#b4b4b4" stroke="none" stroke-width="0" /><path d="M693.8 31L693.8 27L689.8 31Z" fill="#8a8a8a" stroke="none" stroke-width="0" /><path d="M776.6 11V20L767.5 27M776.6 20L786 27" fill="none" stroke="#4e4e4e" stroke-width="1.5" stroke-linecap="round" stroke-linejoin="round"/><path d="M776.6 8.6L779.8 13H773.4ZM765.8 28.6L767 23.6L770.6 27.6ZM788 28.6L783.2 27.6L786.8 23.6Z" fill="#4e4e4e" stroke="none" stroke-width="0" /><path d="M810 10V16M807.6 21L801 26.4M812.4 21L819 26.4" fill="none" stroke="#1f5c9c" stroke-width="1.6" stroke-linecap="round" stroke-linejoin="round"/><circle cx="810" cy="19.2" r="2.9" fill="none" stroke="#1f5c9c" stroke-width="1.5" /><path d="M810 7.4L813.4 12H806.6ZM799.2 28L800.4 22.8L804.2 27ZM820.8 28L815.8 27L819.6 22.8Z" fill="#1f5c9c" stroke="none" stroke-width="0" /><path d="M838 13L851.6 9.6V22.4L838 26ZM838 13L834.6 8.4M846 19L851.6 25" fill="none" stroke="#424242" stroke-width="1.4" stroke-linecap="round" stroke-linejoin="round"/><path d="M833.6 7L838 8L835 11.4Z" fill="#424242" stroke="none" stroke-width="0" /><rect x="882.6" y="10.2" width="19.8" height="19.6" rx="3" fill="#9c9c9c" stroke="none" stroke-width="0" /><path d="M886.8 20.2L890.8 24.4L898 14.6" fill="none" stroke="#1c1c1c" stroke-width="2.2" stroke-linecap="butt" stroke-linejoin="miter"/><path d="M990.4 27.4L997 20.4L1003.6 27.4" fill="none" stroke="#2d8ceb" stroke-width="1.8" stroke-linecap="butt"/><path d="M997.4 19.6L1003.2 13.4" fill="none" stroke="#2d8ceb" stroke-width="1.6" stroke-dasharray="1.8 1.6" stroke-linecap="butt"/><path d="M1007.6 10.2V16.4L1001.6 10.2Z" fill="#2d8ceb" stroke="none" stroke-width="0" /><path d="M1025.4 14.4V10.6H1029.2M1038.6 10.6H1042.4V14.4M1042.4 23.2V27H1038.6M1029.2 27H1025.4V23.2" fill="none" stroke="#2d8ceb" stroke-width="1.6" stroke-linecap="butt"/><path d="M1030.2 17V15.4H1032M1035.8 15.4H1037.6V17M1037.6 20.8V22.4H1035.8M1032 22.4H1030.2V20.8" fill="none" stroke="#2d8ceb" stroke-width="1.5" stroke-linecap="butt"/><path d="M1682 12L1687.4 17.2L1682 22.4M1689.6 12L1695 17.2L1689.6 22.4" fill="none" stroke="#b4b4b4" stroke-width="1.9" stroke-linecap="butt" stroke-linejoin="miter"/><path d="M47.3 55.8L54.7 63.2M54.7 55.8L47.3 63.2" fill="none" stroke="#8c8c8c" stroke-width="1.3" stroke-linecap="butt" stroke-linejoin="miter"/><path d="M100.8 55.3V52.3C100.8 48.3 105.4 47.9 106.8 49.9" fill="none" stroke="#b4b4b4" stroke-width="1.5" stroke-linecap="butt" stroke-linejoin="miter"/><path d="M99.2 54.9H110.5V63.2H99.2ZM104.85000000000001 57.1C103.4 57.1 103.2 58.9 104.10000000000001 59.5L103.8 61.699999999999996H105.9L105.60000000000001 59.5C106.5 58.9 106.3 57.1 104.85000000000001 57.1Z" fill="#b4b4b4" stroke="none" stroke-width="0" fill-rule="evenodd"/><rect x="379.5" y="54.400000000000006" width="11.6" height="1.6" rx="0" fill="#c2c2c2" stroke="none" stroke-width="0" /><rect x="379.5" y="58.800000000000004" width="11.6" height="1.6" rx="0" fill="#b6b6b6" stroke="none" stroke-width="0" /><rect x="379.5" y="63.1" width="11.6" height="1.6" rx="0" fill="#a4a4a4" stroke="none" stroke-width="0" /><path d="M442 52.6L447.8 57.6L442 62.6M449.6 52.6L455.4 57.6L449.6 62.6" fill="none" stroke="#b4b4b4" stroke-width="2.1" stroke-linecap="butt" stroke-linejoin="miter"/><path d="M11.7 114.00999999999999L16.5 119.00999999999999L11.7 124.00999999999999" fill="none" stroke="#b4b4b4" stroke-width="1.5" stroke-linecap="butt" stroke-linejoin="miter"/><g transform="translate(28.6 125.00999999999999) scale(1.0)"><path d="M0.2 3.2C2.2 3.6 3 2.6 3.4 0.6L5.6 -11.4C6.2 -14.4 8 -15 10.4 -14.2" fill="none" stroke="#b0b0b0" stroke-width="1.5" stroke-linecap="butt"/><path d="M3 -8.6H9" stroke="#b0b0b0" stroke-width="1.3"/><path d="M8 -8.4C9.6 -8.6 10 -7.6 10.6 -6.4L13.6 -1.4C14.2 -0.4 14.8 0.2 16 -0.2M7 -0.2L16.2 -8.6" fill="none" stroke="#b0b0b0" stroke-width="1.5" stroke-linecap="butt"/></g><path d="M54.5 115.30999999999999H56.0V112.00999999999999H62.5V115.30999999999999H64.0V112.00999999999999H70.5V115.30999999999999H72.0V127.80999999999999H54.5Z" fill="#b8b8b8" stroke="none" stroke-width="0" /><path d="M64.7 118.21L69.5 121.60999999999999L64.7 125.00999999999999Z" fill="#222" stroke="none" stroke-width="0" /><path d="M58.1 119.00999999999999H63.1M57.3 121.60999999999999H62.7M56.5 124.21H62.1" fill="none" stroke="#222" stroke-width="1.3" stroke-linecap="butt" stroke-linejoin="miter"/><path d="M11.7 138.43L16.5 143.43L11.7 148.43" fill="none" stroke="#b4b4b4" stroke-width="1.5" stroke-linecap="butt" stroke-linejoin="miter"/><g transform="translate(28.6 149.43) scale(1.0)"><path d="M0.2 3.2C2.2 3.6 3 2.6 3.4 0.6L5.6 -11.4C6.2 -14.4 8 -15 10.4 -14.2" fill="none" stroke="#b0b0b0" stroke-width="1.5" stroke-linecap="butt"/><path d="M3 -8.6H9" stroke="#b0b0b0" stroke-width="1.3"/><path d="M8 -8.4C9.6 -8.6 10 -7.6 10.6 -6.4L13.6 -1.4C14.2 -0.4 14.8 0.2 16 -0.2M7 -0.2L16.2 -8.6" fill="none" stroke="#b0b0b0" stroke-width="1.5" stroke-linecap="butt"/></g><path d="M11.7 162.85L16.5 167.85L11.7 172.85" fill="none" stroke="#b4b4b4" stroke-width="1.5" stroke-linecap="butt" stroke-linejoin="miter"/><g transform="translate(28.6 173.85) scale(1.0)"><path d="M0.2 3.2C2.2 3.6 3 2.6 3.4 0.6L5.6 -11.4C6.2 -14.4 8 -15 10.4 -14.2" fill="none" stroke="#b0b0b0" stroke-width="1.5" stroke-linecap="butt"/><path d="M3 -8.6H9" stroke="#b0b0b0" stroke-width="1.3"/><path d="M8 -8.4C9.6 -8.6 10 -7.6 10.6 -6.4L13.6 -1.4C14.2 -0.4 14.8 0.2 16 -0.2M7 -0.2L16.2 -8.6" fill="none" stroke="#b0b0b0" stroke-width="1.5" stroke-linecap="butt"/></g><path d="M11.400000000000002 191.37L16.6 196.17000000000002L21.8 191.37" fill="none" stroke="#b4b4b4" stroke-width="1.5" stroke-linecap="butt" stroke-linejoin="miter"/><g transform="translate(28.6 198.27) scale(1.0)"><path d="M0.2 3.2C2.2 3.6 3 2.6 3.4 0.6L5.6 -11.4C6.2 -14.4 8 -15 10.4 -14.2" fill="none" stroke="#b0b0b0" stroke-width="1.5" stroke-linecap="butt"/><path d="M3 -8.6H9" stroke="#b0b0b0" stroke-width="1.3"/><path d="M8 -8.4C9.6 -8.6 10 -7.6 10.6 -6.4L13.6 -1.4C14.2 -0.4 14.8 0.2 16 -0.2M7 -0.2L16.2 -8.6" fill="none" stroke="#b0b0b0" stroke-width="1.5" stroke-linecap="butt"/></g><path d="M54.5 188.57000000000002H56.0V185.27H62.5V188.57000000000002H64.0V185.27H70.5V188.57000000000002H72.0V201.07000000000002H54.5Z" fill="#b8b8b8" stroke="none" stroke-width="0" /><path d="M64.7 191.47L69.5 194.87L64.7 198.27Z" fill="#222" stroke="none" stroke-width="0" /><path d="M58.1 192.27H63.1M57.3 194.87H62.7M56.5 197.47H62.1" fill="none" stroke="#222" stroke-width="1.3" stroke-linecap="butt" stroke-linejoin="miter"/><circle cx="61" cy="217.99000000000004" r="7.2" fill="none" stroke="#a8a8a8" stroke-width="1.5" /><path d="M61 210.39000000000004V207.99000000000004M58.6 207.79000000000005H63.6M54.1 210.39000000000004L55.4 211.79000000000005" fill="none" stroke="#a8a8a8" stroke-width="1.4" stroke-linecap="butt" stroke-linejoin="miter"/><path d="M409.2 214.69000000000003L414.5 219.89000000000001L419.8 214.69000000000003" fill="none" stroke="#c4c4c4" stroke-width="1.5" stroke-linecap="butt" stroke-linejoin="miter"/><circle cx="61" cy="242.41000000000003" r="7.2" fill="none" stroke="#a8a8a8" stroke-width="1.5" /><path d="M61 234.81000000000003V232.41000000000003M58.6 232.21000000000004H63.6M54.1 234.81000000000003L55.4 236.21000000000004" fill="none" stroke="#a8a8a8" stroke-width="1.4" stroke-linecap="butt" stroke-linejoin="miter"/><path d="M36.300000000000004 236.11L41.1 241.11L36.300000000000004 246.11" fill="none" stroke="#b4b4b4" stroke-width="1.5" stroke-linecap="butt" stroke-linejoin="miter"/><circle cx="61" cy="266.83" r="7.2" fill="none" stroke="#a8a8a8" stroke-width="1.5" /><path d="M61 259.22999999999996V256.83M58.6 256.63H63.6M54.1 259.22999999999996L55.4 260.63" fill="none" stroke="#a8a8a8" stroke-width="1.4" stroke-linecap="butt" stroke-linejoin="miter"/><path d="M36.300000000000004 260.53L41.1 265.53L36.300000000000004 270.53" fill="none" stroke="#b4b4b4" stroke-width="1.5" stroke-linecap="butt" stroke-linejoin="miter"/><circle cx="61" cy="291.25" r="7.2" fill="none" stroke="#a8a8a8" stroke-width="1.5" /><path d="M61 283.65V281.25M58.6 281.05H63.6M54.1 283.65L55.4 285.05" fill="none" stroke="#a8a8a8" stroke-width="1.4" stroke-linecap="butt" stroke-linejoin="miter"/><path d="M36.300000000000004 284.95L41.1 289.95L36.300000000000004 294.95" fill="none" stroke="#b4b4b4" stroke-width="1.5" stroke-linecap="butt" stroke-linejoin="miter"/><circle cx="61" cy="315.67" r="7.2" fill="none" stroke="#a8a8a8" stroke-width="1.5" /><path d="M61 308.07V305.67M58.6 305.47H63.6M54.1 308.07L55.4 309.47" fill="none" stroke="#a8a8a8" stroke-width="1.4" stroke-linecap="butt" stroke-linejoin="miter"/><path d="M409.2 312.37L414.5 317.57000000000005L419.8 312.37" fill="none" stroke="#c4c4c4" stroke-width="1.5" stroke-linecap="butt" stroke-linejoin="miter"/><circle cx="61" cy="340.09000000000003" r="7.2" fill="none" stroke="#a8a8a8" stroke-width="1.5" /><path d="M61 332.49V330.09000000000003M58.6 329.89000000000004H63.6M54.1 332.49L55.4 333.89000000000004" fill="none" stroke="#a8a8a8" stroke-width="1.4" stroke-linecap="butt" stroke-linejoin="miter"/><path d="M409.2 336.79L414.5 341.99000000000007L419.8 336.79" fill="none" stroke="#c4c4c4" stroke-width="1.5" stroke-linecap="butt" stroke-linejoin="miter"/><circle cx="61" cy="364.51" r="7.2" fill="none" stroke="#a8a8a8" stroke-width="1.5" /><path d="M61 356.90999999999997V354.51M58.6 354.31H63.6M54.1 356.90999999999997L55.4 358.31" fill="none" stroke="#a8a8a8" stroke-width="1.4" stroke-linecap="butt" stroke-linejoin="miter"/><path d="M409.2 361.21L414.5 366.41L419.8 361.21" fill="none" stroke="#c4c4c4" stroke-width="1.5" stroke-linecap="butt" stroke-linejoin="miter"/><circle cx="61" cy="388.93" r="7.2" fill="none" stroke="#a8a8a8" stroke-width="1.5" /><path d="M61 381.33V378.93M58.6 378.73H63.6M54.1 381.33L55.4 382.73" fill="none" stroke="#a8a8a8" stroke-width="1.4" stroke-linecap="butt" stroke-linejoin="miter"/><path d="M409.2 385.63L414.5 390.83000000000004L419.8 385.63" fill="none" stroke="#c4c4c4" stroke-width="1.5" stroke-linecap="butt" stroke-linejoin="miter"/><circle cx="61" cy="413.35" r="7.2" fill="none" stroke="#a8a8a8" stroke-width="1.5" /><path d="M61 405.75V403.35M58.6 403.15000000000003H63.6M54.1 405.75L55.4 407.15000000000003" fill="none" stroke="#a8a8a8" stroke-width="1.4" stroke-linecap="butt" stroke-linejoin="miter"/><path d="M36.300000000000004 407.05L41.1 412.05L36.300000000000004 417.05" fill="none" stroke="#b4b4b4" stroke-width="1.5" stroke-linecap="butt" stroke-linejoin="miter"/><circle cx="61" cy="437.77000000000004" r="7.2" fill="none" stroke="#a8a8a8" stroke-width="1.5" /><path d="M61 430.17V427.77000000000004M58.6 427.57000000000005H63.6M54.1 430.17L55.4 431.57000000000005" fill="none" stroke="#a8a8a8" stroke-width="1.4" stroke-linecap="butt" stroke-linejoin="miter"/><path d="M36 435.27000000000004L41 440.07L46 435.27000000000004" fill="none" stroke="#b4b4b4" stroke-width="1.5" stroke-linecap="butt" stroke-linejoin="miter"/><circle cx="61" cy="519.79" r="7.2" fill="none" stroke="#a8a8a8" stroke-width="1.5" /><path d="M61 512.1899999999999V509.78999999999996M58.6 509.59H63.6M54.1 512.1899999999999L55.4 513.5899999999999" fill="none" stroke="#a8a8a8" stroke-width="1.4" stroke-linecap="butt" stroke-linejoin="miter"/><path d="M36.300000000000004 513.49L41.1 518.49L36.300000000000004 523.49" fill="none" stroke="#b4b4b4" stroke-width="1.5" stroke-linecap="butt" stroke-linejoin="miter"/><circle cx="61" cy="544.21" r="7.2" fill="none" stroke="#a8a8a8" stroke-width="1.5" /><path d="M61 536.61V534.21M58.6 534.01H63.6M54.1 536.61L55.4 538.01" fill="none" stroke="#a8a8a8" stroke-width="1.4" stroke-linecap="butt" stroke-linejoin="miter"/><circle cx="61" cy="568.63" r="7.2" fill="none" stroke="#a8a8a8" stroke-width="1.5" /><path d="M61 561.03V558.63M58.6 558.43H63.6M54.1 561.03L55.4 562.43" fill="none" stroke="#a8a8a8" stroke-width="1.4" stroke-linecap="butt" stroke-linejoin="miter"/><circle cx="61" cy="593.0500000000001" r="7.2" fill="none" stroke="#a8a8a8" stroke-width="1.5" /><path d="M61 585.45V583.0500000000001M58.6 582.85H63.6M54.1 585.45L55.4 586.85" fill="none" stroke="#a8a8a8" stroke-width="1.4" stroke-linecap="butt" stroke-linejoin="miter"/><path d="M410 589.7500000000001L415 594.9500000000002L420 589.7500000000001" fill="none" stroke="#c4c4c4" stroke-width="1.5" stroke-linecap="butt" stroke-linejoin="miter"/><circle cx="279.7" cy="476.4" r="23.7" fill="none" stroke="#8c8c8c" stroke-width="1.8" /><path d="M279.7 476.4V454.6" fill="none" stroke="#8c8c8c" stroke-width="2.6" stroke-linecap="butt" stroke-linejoin="miter"/><rect x="255.4" y="532.9100000000001" width="30" height="20" rx="0" fill="#1c1c1c" stroke="#8a8a8a" stroke-width="1.5" /><rect x="257.8" y="535.3100000000001" width="25.2" height="15.2" rx="0" fill="#fff" stroke="none" stroke-width="0" /><rect x="292.6" y="532.9100000000001" width="29.8" height="20" rx="0" fill="none" stroke="#7e7e7e" stroke-width="1.5" /><path d="M295.4 542.9100000000001C297 541.3100000000001 300 541.1100000000001 309.4 541.0100000000001V544.8100000000001C300 544.71 297 544.5100000000001 295.4 542.9100000000001Z" fill="none" stroke="#a8a8a8" stroke-width="1" /><path d="M309.6 540.3100000000001H311.6V538.9100000000001H314.6V540.3100000000001H319.6V545.5100000000001H314.6V546.9100000000001H311.6V545.5100000000001H309.6Z" fill="#a8a8a8" stroke="none" stroke-width="0" /><rect x="255.4" y="557.33" width="30" height="20" rx="0" fill="#1c1c1c" stroke="#8a8a8a" stroke-width="1.5" /><rect x="257.8" y="559.73" width="25.2" height="15.2" rx="0" fill="#000" stroke="none" stroke-width="0" /><rect x="292.6" y="557.33" width="29.8" height="20" rx="0" fill="none" stroke="#7e7e7e" stroke-width="1.5" /><path d="M295.4 567.33C297 565.73 300 565.5300000000001 309.4 565.4300000000001V569.23C300 569.13 297 568.9300000000001 295.4 567.33Z" fill="none" stroke="#a8a8a8" stroke-width="1" /><path d="M309.6 564.73H311.6V563.33H314.6V564.73H319.6V569.9300000000001H314.6V571.33H311.6V569.9300000000001H309.6Z" fill="#a8a8a8" stroke="none" stroke-width="0" /><path d="M483.3 55.8L490.7 63.2M490.7 55.8L483.3 63.2" fill="none" stroke="#8c8c8c" stroke-width="1.3" stroke-linecap="butt" stroke-linejoin="miter"/><path d="M536.8000000000001 55.3V52.3C536.8000000000001 48.3 541.4000000000001 47.9 542.8000000000001 49.9" fill="none" stroke="#b4b4b4" stroke-width="1.5" stroke-linecap="butt" stroke-linejoin="miter"/><path d="M535.2 54.9H546.5V63.2H535.2ZM540.85 57.1C539.4000000000001 57.1 539.2 58.9 540.1 59.5L539.8000000000001 61.699999999999996H541.9000000000001L541.6 59.5C542.5 58.9 542.3000000000001 57.1 540.85 57.1Z" fill="#b4b4b4" stroke="none" stroke-width="0" fill-rule="evenodd"/><rect x="695.2" y="54.400000000000006" width="11.6" height="1.6" rx="0" fill="#c2c2c2" stroke="none" stroke-width="0" /><rect x="695.2" y="58.800000000000004" width="11.6" height="1.6" rx="0" fill="#b6b6b6" stroke="none" stroke-width="0" /><rect x="695.2" y="63.1" width="11.6" height="1.6" rx="0" fill="#a4a4a4" stroke="none" stroke-width="0" /><path d="M556.0 718.2L561.4 723.8L566.8 718.2" fill="none" stroke="#c4c4c4" stroke-width="1.5" stroke-linecap="butt" stroke-linejoin="miter"/><path d="M702.1 718.2L707.5 723.8L712.9 718.2" fill="none" stroke="#c4c4c4" stroke-width="1.5" stroke-linecap="butt" stroke-linejoin="miter"/><path d="M761.4 722V712.2H742.8V727.8H752" fill="none" stroke="#b4b4b4" stroke-width="1.4" stroke-linecap="butt" stroke-linejoin="miter"/><path d="M754.2 724.6H761.6L757.9 728.6Z" fill="#b4b4b4" stroke="none" stroke-width="0" /><path d="M753.6 713.6L748 721H751.4L749.6 726.4L756 718.6H752.4Z" fill="#b4b4b4" stroke="none" stroke-width="0" /><rect x="773.6" y="713.6" width="19.6" height="14.6" rx="0" fill="#4c4c4c" stroke="#b0b0b0" stroke-width="1.2" /><rect x="774.2" y="714.2" width="4.6" height="4.5" rx="0" fill="#8c8c8c" stroke="none" stroke-width="0" /><rect x="783.4000000000001" y="714.2" width="4.6" height="4.5" rx="0" fill="#8c8c8c" stroke="none" stroke-width="0" /><rect x="778.8000000000001" y="718.7" width="4.6" height="4.5" rx="0" fill="#8c8c8c" stroke="none" stroke-width="0" /><rect x="788.0" y="718.7" width="4.6" height="4.5" rx="0" fill="#8c8c8c" stroke="none" stroke-width="0" /><rect x="774.2" y="723.2" width="4.6" height="4.5" rx="0" fill="#8c8c8c" stroke="none" stroke-width="0" /><rect x="783.4000000000001" y="723.2" width="4.6" height="4.5" rx="0" fill="#8c8c8c" stroke="none" stroke-width="0" /><rect x="778.8000000000001" y="714.2" width="4.6" height="4.5" rx="0" fill="#3a3a3a" stroke="none" stroke-width="0" /><rect x="788.0" y="714.2" width="4.6" height="4.5" rx="0" fill="#3a3a3a" stroke="none" stroke-width="0" /><rect x="774.2" y="718.7" width="4.6" height="4.5" rx="0" fill="#3a3a3a" stroke="none" stroke-width="0" /><rect x="783.4000000000001" y="718.7" width="4.6" height="4.5" rx="0" fill="#3a3a3a" stroke="none" stroke-width="0" /><rect x="778.8000000000001" y="723.2" width="4.6" height="4.5" rx="0" fill="#3a3a3a" stroke="none" stroke-width="0" /><rect x="788.0" y="723.2" width="4.6" height="4.5" rx="0" fill="#3a3a3a" stroke="none" stroke-width="0" /><path d="M806.2 719.4L813.8 712.8H823.4V727H806.2Z" fill="none" stroke="#2d8ceb" stroke-width="1.6" stroke-linejoin="round"/><circle cx="806.2" cy="719.4" r="1.5" fill="#2d8ceb" stroke="none" stroke-width="0" /><circle cx="813.8" cy="712.8" r="1.5" fill="#2d8ceb" stroke="none" stroke-width="0" /><circle cx="823.4" cy="712.8" r="1.5" fill="#2d8ceb" stroke="none" stroke-width="0" /><circle cx="823.4" cy="727" r="1.5" fill="#2d8ceb" stroke="none" stroke-width="0" /><circle cx="806.2" cy="727" r="1.5" fill="#2d8ceb" stroke="none" stroke-width="0" /><circle cx="823.4" cy="719.8" r="1.5" fill="#2d8ceb" stroke="none" stroke-width="0" /><rect x="837.3" y="712.3" width="18.2" height="15.6" rx="0" fill="none" stroke="#b4b4b4" stroke-width="1.4" /><rect x="842.2" y="717.6" width="9.8" height="6.4" rx="0" fill="#b4b4b4" stroke="none" stroke-width="0" /><rect x="868.8" y="712.8" width="16.8" height="10.4" rx="0" fill="none" stroke="#b4b4b4" stroke-width="1.3" /><path d="M877.2 710.4V715M877.2 721.2V725.6M866.6 718H870.8M883.6 718H888" fill="none" stroke="#b4b4b4" stroke-width="1.3" stroke-linecap="butt" stroke-linejoin="miter"/><path d="M877.2 716L879 718L877.2 720L875.4 718Z" fill="#b4b4b4" stroke="none" stroke-width="0" /><path d="M880 727.6H887.6L883.8 731.2Z" fill="#b4b4b4" stroke="none" stroke-width="0" /><circle cx="923.1" cy="714.6" r="4.3" fill="#f03428" stroke="none" stroke-width="0" /><circle cx="919.4" cy="721.2" r="4.3" fill="#22c02e" stroke="none" stroke-width="0" /><circle cx="926.9" cy="721.2" r="4.3" fill="#3c6cf0" stroke="none" stroke-width="0" /><path d="M926.6 727.4H933.8L930.2 731Z" fill="#c0c0c0" stroke="none" stroke-width="0" /><circle cx="955.8" cy="722" r="8.8" fill="#a8a8a8" stroke="none" stroke-width="0" /><path d="M955.8 722L959.4 713.8" stroke="#2a2a2a" stroke-width="1.3" transform="rotate(8 955.8 722)"/><path d="M955.8 722L959.4 713.8" stroke="#2a2a2a" stroke-width="1.3" transform="rotate(68 955.8 722)"/><path d="M955.8 722L959.4 713.8" stroke="#2a2a2a" stroke-width="1.3" transform="rotate(128 955.8 722)"/><path d="M955.8 722L959.4 713.8" stroke="#2a2a2a" stroke-width="1.3" transform="rotate(188 955.8 722)"/><path d="M955.8 722L959.4 713.8" stroke="#2a2a2a" stroke-width="1.3" transform="rotate(248 955.8 722)"/><path d="M955.8 722L959.4 713.8" stroke="#2a2a2a" stroke-width="1.3" transform="rotate(308 955.8 722)"/><circle cx="955.8" cy="722" r="2.9" fill="#2a2a2a" stroke="none" stroke-width="0" /><path d="M1040.4 715.6H1045.6L1047 713H1054L1055.4 715.6H1060.8V728.4H1040.4Z" fill="#b4b4b4" stroke="none" stroke-width="0" /><circle cx="1050.6" cy="721.6" r="4.2" fill="#282828" stroke="none" stroke-width="0" /><circle cx="1050.6" cy="721.6" r="2.4" fill="#b4b4b4" stroke="none" stroke-width="0" /><path d="M1071.4 722.8C1075 716.6 1083 716.6 1086.8 722.8C1083 728.8 1075 728.8 1071.4 722.8Z" fill="#4a4a4a" stroke="none" stroke-width="0" /><circle cx="1079.2" cy="722.6" r="2.6" fill="#282828" stroke="none" stroke-width="0" /><path d="M1080.6 713.4H1084L1084.8 712H1088.6L1089.4 713.4H1092.6V720.6H1088.4C1087 718 1084 716.6 1080.6 716.4Z" fill="#4a4a4a" stroke="none" stroke-width="0" /><circle cx="1086.8" cy="716.6" r="1.6" fill="#282828" stroke="none" stroke-width="0" /><rect x="1955.8" y="183.6" width="11.6" height="1.6" rx="0" fill="#c2c2c2" stroke="none" stroke-width="0" /><rect x="1955.8" y="188.0" width="11.6" height="1.6" rx="0" fill="#b6b6b6" stroke="none" stroke-width="0" /><rect x="1955.8" y="192.3" width="11.6" height="1.6" rx="0" fill="#a4a4a4" stroke="none" stroke-width="0" /><circle cx="1631" cy="223" r="5.2" fill="none" stroke="#2d8ceb" stroke-width="1.6" /><path d="M1627.4 227L1619.6 234" fill="none" stroke="#2d8ceb" stroke-width="1.9" stroke-linecap="round"/><path d="M1635.6 230.2H1642.6L1639.1 233.8Z" fill="#2d8ceb" stroke="none" stroke-width="0" /><path d="M1958.4 220.8L1969.6 232.0M1969.6 220.8L1958.4 232.0" fill="none" stroke="#d6d6d6" stroke-width="1.9" stroke-linecap="butt" stroke-linejoin="miter"/><path d="M1610.7 254.0L1616 259.6L1621.3 254.0" fill="none" stroke="#b4b4b4" stroke-width="1.5" stroke-linecap="butt" stroke-linejoin="miter"/><path d="M1610.7 302.8L1616 308.40000000000003L1621.3 302.8" fill="none" stroke="#b4b4b4" stroke-width="1.5" stroke-linecap="butt" stroke-linejoin="miter"/><path d="M1651 276.3H1652.5V273H1659V276.3H1660.5V273H1667V276.3H1668.5V289H1651Z" fill="#bdbdbd" stroke="none" stroke-width="0" /><text x="1659.6" y="288" font-family="Liberation Sans, sans-serif" font-size="12.5" font-weight="700" fill="#343434" text-anchor="middle" letter-spacing="-0.5">32</text><path d="M1651 324.90000000000003H1652.5V321.6H1659V324.90000000000003H1660.5V321.6H1667V324.90000000000003H1668.5V337.6H1651Z" fill="#bdbdbd" stroke="none" stroke-width="0" /><text x="1659.6" y="336.6" font-family="Liberation Sans, sans-serif" font-size="12.5" font-weight="700" fill="#272727" text-anchor="middle" letter-spacing="-0.5">32</text><path d="M1954 346.4H1972.2V364H1961.2V353.4H1954Z" fill="#c4c4c4" stroke="none" stroke-width="0" /><path d="M1954.6 354.6H1960V364L1954.6 358Z" fill="#c4c4c4" stroke="none" stroke-width="0" /><defs><filter id="gl" x="-30%" y="-30%" width="160%" height="160%"><feGaussianBlur stdDeviation="2.4"/></filter><filter id="gl2" x="-20%" y="-20%" width="140%" height="140%"><feGaussianBlur stdDeviation="0.55"/></filter><filter id="gl3" x="-20%" y="-20%" width="140%" height="140%"><feGaussianBlur stdDeviation="1.2"/></filter></defs><g fill="none" stroke="#fff" stroke-linecap="round" stroke-linejoin="round" stroke-width="4.6" opacity="0.62" filter="url(#gl)"><path d="M932.0 317.0C933.5 317.4 938.0 318.4 941.0 319.5C944.0 320.6 948.2 323.1 949.7 323.8"/><path d="M954.3 309.6C956.4 309.4 962.8 307.7 966.8 308.5C970.8 309.3 975.0 311.7 978.2 314.2C981.4 316.7 984.1 319.9 986.2 323.3C988.3 326.7 989.2 330.9 990.7 334.7C992.2 338.5 993.6 342.2 995.3 346.0C997.0 349.8 1000.0 355.5 1001.0 357.4"/><path d="M956.6 317.6C957.3 318.9 959.7 323.1 961.0 325.6C962.3 328.1 964.7 331.0 964.5 332.4C964.3 333.8 960.8 333.7 960.0 334.0"/><path d="M940.6 325.6C941.7 328.6 945.3 337.7 947.4 343.8C949.5 349.9 951.6 356.3 953.1 362.0C954.6 367.7 955.8 372.7 956.6 378.0C957.4 383.3 957.2 389.2 957.7 393.9C958.2 398.6 958.1 400.7 959.5 406.0C960.9 411.3 963.2 420.1 966.0 425.5C968.8 430.9 972.1 433.9 976.4 438.5C980.7 443.1 987.2 448.7 992.0 452.8C996.8 456.9 1001.8 461.2 1005.0 463.2C1008.2 465.2 1010.0 464.7 1011.0 465.0"/><path d="M961.1 331.3C962.6 334.9 967.9 345.1 970.2 352.9C972.5 360.7 973.6 371.2 974.8 378.0C975.9 384.8 976.7 391.2 977.1 393.9"/><path d="M994.1 359.7C992.4 361.6 985.0 367.3 983.9 371.1C982.8 374.9 987.4 379.0 987.3 382.5C987.1 386.0 984.5 389.8 983.0 392.0C981.5 394.2 978.8 395.3 978.0 396.0"/><path d="M1002.0 386.0C1004.7 388.2 1013.2 394.0 1018.0 399.5C1022.8 405.0 1027.1 411.9 1031.0 419.0C1034.9 426.1 1038.2 434.6 1041.5 442.4C1044.8 450.2 1047.6 458.2 1050.6 465.8C1053.6 473.4 1056.5 481.7 1059.7 488.0C1062.9 494.3 1064.8 497.8 1070.0 503.6C1075.2 509.4 1087.4 519.8 1090.9 523.0"/><path d="M1002.0 384.0C1005.0 386.2 1013.7 393.9 1020.0 397.0C1026.3 400.1 1033.7 402.0 1040.0 402.5C1046.3 403.0 1055.0 400.4 1058.0 400.0"/><path d="M978.0 396.0C976.7 398.8 975.6 412.1 976.4 419.0C977.2 425.9 979.9 431.6 982.9 437.2C985.9 442.8 990.9 448.7 994.6 452.8C998.3 456.9 1002.8 460.8 1005.0 462.0C1007.2 463.2 1008.0 462.0 1008.0 460.0C1008.0 458.0 1006.1 454.9 1005.0 450.2C1003.9 445.5 1002.8 438.3 1001.1 432.0C999.4 425.7 997.5 417.5 994.6 412.5C991.8 407.5 986.8 404.8 984.0 402.0C981.2 399.2 979.3 393.2 978.0 396.0Z"/><path d="M1001.1 413.8C1000.9 416.5 1003.5 425.5 1005.0 432.0C1006.5 438.5 1008.0 446.7 1010.2 452.8C1012.4 458.9 1015.6 464.7 1018.0 468.4C1020.4 472.1 1022.7 474.2 1024.5 475.0C1026.3 475.8 1028.1 475.0 1028.6 473.0C1029.0 471.0 1028.1 467.4 1027.2 463.2C1026.3 459.0 1025.2 453.2 1023.2 447.6C1021.2 442.0 1018.3 434.7 1015.4 429.4C1012.5 424.1 1008.4 418.6 1006.0 416.0C1003.6 413.4 1001.3 411.1 1001.1 413.8Z"/><path d="M1025.8 442.4C1025.7 444.8 1027.5 454.1 1029.7 460.6C1031.9 467.1 1035.6 475.6 1038.9 481.5C1042.2 487.4 1046.7 492.6 1049.3 495.8C1051.9 499.1 1053.2 500.8 1054.5 501.0C1055.8 501.2 1058.1 499.8 1057.4 497.0C1056.8 494.2 1053.2 489.4 1050.6 484.0C1047.9 478.6 1044.8 470.8 1041.5 464.5C1038.2 458.2 1033.1 449.7 1030.5 446.0C1027.9 442.3 1025.9 440.0 1025.8 442.4Z"/><path d="M998.0 366.0C1001.0 363.0 1014.1 359.5 1022.2 354.1C1030.3 348.7 1036.4 339.9 1046.6 333.4C1056.8 326.9 1071.0 320.4 1083.2 315.1C1095.4 309.8 1107.6 305.4 1119.8 301.7C1132.0 297.9 1147.4 294.5 1156.3 292.6C1165.2 290.7 1169.5 290.1 1173.4 290.1C1177.3 290.1 1178.9 291.6 1179.5 292.8C1180.1 294.0 1179.9 294.4 1177.1 297.5C1174.2 300.6 1168.3 306.8 1162.4 311.5C1156.5 316.2 1148.8 322.1 1141.7 325.5C1134.6 328.9 1129.5 329.4 1119.8 332.2C1110.0 334.9 1095.4 338.6 1083.2 342.0C1071.0 345.4 1056.8 349.4 1046.6 352.9C1036.4 356.3 1029.3 359.5 1022.2 362.7C1015.1 365.9 1008.0 371.4 1004.0 372.0C1000.0 372.6 995.0 369.0 998.0 366.0Z"/><path d="M1008.0 372.0C1014.1 368.7 1034.1 360.5 1046.6 356.0C1059.1 351.5 1071.0 348.4 1083.2 345.0C1095.4 341.6 1111.1 337.8 1119.8 335.5C1128.5 333.2 1133.6 330.5 1135.6 331.0C1137.6 331.5 1134.6 334.4 1132.0 338.3C1129.4 342.2 1124.7 349.4 1119.8 354.1C1114.9 358.8 1108.4 363.2 1102.7 366.3C1097.0 369.4 1092.9 371.2 1085.6 372.4C1078.3 373.6 1067.3 373.5 1058.8 373.7C1050.3 373.9 1042.5 373.3 1034.4 373.7C1026.3 374.1 1014.4 376.3 1010.0 376.0C1005.6 375.7 1001.9 375.3 1008.0 372.0Z"/><path d="M1010.0 379.0C1017.1 378.9 1036.4 379.6 1046.6 379.5C1056.8 379.4 1064.9 379.1 1071.0 378.5C1077.1 377.9 1082.6 375.2 1083.0 376.0C1083.4 376.8 1076.4 380.9 1073.4 383.4C1070.4 385.8 1068.4 388.7 1064.9 390.7C1061.5 392.7 1057.8 395.0 1052.7 395.6C1047.6 396.2 1040.5 395.8 1034.4 394.4C1028.3 393.0 1021.1 389.4 1016.0 387.0C1010.9 384.6 1005.0 381.3 1004.0 380.0C1003.0 378.7 1002.9 379.1 1010.0 379.0Z"/><path d="M880.3 297.7C884.4 298.5 897.5 301.2 905.0 302.5C912.5 303.8 918.7 304.6 925.0 305.5C931.3 306.4 938.0 307.5 942.9 308.2C947.8 308.9 952.4 309.4 954.3 309.6"/><path d="M978.0 396.0L976.4 419.0L982.9 437.2L994.6 452.8L1005.0 462.0L1012.0 465.5L1018.0 468.4L1024.5 475.4L1028.6 473.5L1031.0 468.0L1038.9 481.5L1049.3 495.8L1054.5 501.4L1058.0 498.5L1090.9 523.0L1070.0 503.6L1059.7 488.0L1050.6 465.8L1041.5 442.4L1031.0 419.0L1018.0 399.5L1002.0 386.0L990.0 384.0L983.9 380.0Z" fill="#fff"/><path d="M986.0 373.0L999.0 362.0L1016.0 356.0L1034.0 347.0L1028.0 360.0L1036.0 373.0L1022.0 381.0L1008.0 390.0L995.0 387.0Z" fill="#fff"/></g><g fill="#e2e2e2" opacity="0.8" filter="url(#gl2)"><path d="M978.0 396.0C976.8 402.5 975.6 412.1 976.4 419.0C977.2 425.9 979.9 431.6 982.9 437.2C985.9 442.8 990.9 448.7 994.6 452.8C998.3 456.9 1002.1 459.9 1005.0 462.0C1007.9 464.1 1009.8 464.4 1012.0 465.5C1014.2 466.6 1015.9 466.8 1018.0 468.4C1020.1 470.0 1022.7 474.5 1024.5 475.4C1026.3 476.2 1027.5 474.7 1028.6 473.5C1029.7 472.3 1029.3 466.7 1031.0 468.0C1032.7 469.3 1035.9 476.9 1038.9 481.5C1042.0 486.1 1046.7 492.5 1049.3 495.8C1051.9 499.1 1053.0 500.9 1054.5 501.4C1056.0 501.8 1051.9 494.9 1058.0 498.5C1064.1 502.1 1088.9 522.1 1090.9 523.0C1092.9 523.9 1075.2 509.4 1070.0 503.6C1064.8 497.8 1062.9 494.3 1059.7 488.0C1056.5 481.7 1053.6 473.4 1050.6 465.8C1047.6 458.2 1044.8 450.2 1041.5 442.4C1038.2 434.6 1034.9 426.1 1031.0 419.0C1027.1 411.9 1022.8 405.0 1018.0 399.5C1013.2 394.0 1006.7 388.6 1002.0 386.0C997.3 383.4 993.0 385.0 990.0 384.0C987.0 383.0 985.9 378.0 983.9 380.0C981.9 382.0 979.2 389.5 978.0 396.0Z"/><path d="M942.9 308.0C944.6 307.5 950.3 309.5 954.3 309.6C958.3 309.7 962.8 307.7 966.8 308.5C970.8 309.3 975.0 311.7 978.2 314.2C981.4 316.7 984.1 319.9 986.2 323.3C988.3 326.7 989.2 330.9 990.7 334.7C992.2 338.5 993.6 342.2 995.3 346.0C997.0 349.8 1001.2 355.1 1001.0 357.4C1000.8 359.7 996.0 360.4 994.1 359.7C992.2 358.9 991.7 356.3 989.6 352.9C987.5 349.5 984.2 343.3 981.6 339.2C979.0 335.1 976.8 328.8 974.0 328.0C971.2 327.2 967.7 334.2 965.0 334.5C962.3 334.8 960.5 331.8 958.0 330.0C955.5 328.2 952.6 324.5 949.7 323.8C946.8 323.1 941.4 326.5 940.6 325.6C939.8 324.7 946.4 320.0 945.0 318.6C943.6 317.2 932.2 318.0 932.0 317.0C931.8 316.0 942.2 314.0 944.0 312.5C945.8 311.0 941.2 308.5 942.9 308.0Z"/></g><path d="M986.0 373.0C986.7 368.8 994.0 364.8 999.0 362.0C1004.0 359.2 1010.2 358.5 1016.0 356.0C1021.8 353.5 1032.0 346.3 1034.0 347.0C1036.0 347.7 1027.7 355.7 1028.0 360.0C1028.3 364.3 1037.0 369.5 1036.0 373.0C1035.0 376.5 1026.7 378.2 1022.0 381.0C1017.3 383.8 1012.5 389.0 1008.0 390.0C1003.5 391.0 998.7 389.8 995.0 387.0C991.3 384.2 985.3 377.2 986.0 373.0Z" fill="#fff" opacity="0.9" filter="url(#gl3)"/><g fill="#000" filter="url(#gl2)"><path d="M978.0 396.0C976.7 398.8 975.6 412.1 976.4 419.0C977.2 425.9 979.9 431.6 982.9 437.2C985.9 442.8 990.9 448.7 994.6 452.8C998.3 456.9 1002.8 460.8 1005.0 462.0C1007.2 463.2 1008.0 462.0 1008.0 460.0C1008.0 458.0 1006.1 454.9 1005.0 450.2C1003.9 445.5 1002.8 438.3 1001.1 432.0C999.4 425.7 997.5 417.5 994.6 412.5C991.8 407.5 986.8 404.8 984.0 402.0C981.2 399.2 979.3 393.2 978.0 396.0Z"/><path d="M1001.1 413.8C1000.9 416.5 1003.5 425.5 1005.0 432.0C1006.5 438.5 1008.0 446.7 1010.2 452.8C1012.4 458.9 1015.6 464.7 1018.0 468.4C1020.4 472.1 1022.7 474.2 1024.5 475.0C1026.3 475.8 1028.1 475.0 1028.6 473.0C1029.0 471.0 1028.1 467.4 1027.2 463.2C1026.3 459.0 1025.2 453.2 1023.2 447.6C1021.2 442.0 1018.3 434.7 1015.4 429.4C1012.5 424.1 1008.4 418.6 1006.0 416.0C1003.6 413.4 1001.3 411.1 1001.1 413.8Z"/><path d="M1025.8 442.4C1025.7 444.8 1027.5 454.1 1029.7 460.6C1031.9 467.1 1035.6 475.6 1038.9 481.5C1042.2 487.4 1046.7 492.6 1049.3 495.8C1051.9 499.1 1053.2 500.8 1054.5 501.0C1055.8 501.2 1058.1 499.8 1057.4 497.0C1056.8 494.2 1053.2 489.4 1050.6 484.0C1047.9 478.6 1044.8 470.8 1041.5 464.5C1038.2 458.2 1033.1 449.7 1030.5 446.0C1027.9 442.3 1025.9 440.0 1025.8 442.4Z"/></g><g fill="none" stroke="#ececec" stroke-linecap="round" stroke-linejoin="round" opacity="0.92" filter="url(#gl2)"><path d="M945.0 328.0C946.2 331.0 950.1 339.6 952.0 346.0C953.9 352.4 955.4 359.8 956.6 366.5C957.8 373.2 958.8 379.9 959.4 386.0C960.0 392.1 959.7 398.0 960.3 403.0C960.9 408.0 961.4 411.5 963.0 416.0C964.6 420.5 967.0 425.5 970.0 430.0C973.0 434.5 977.0 438.9 981.0 443.0C985.0 447.1 989.8 451.2 994.0 454.5C998.2 457.8 1004.0 461.6 1006.0 463.0" stroke-width="3.6"/><path d="M958.0 332.5C959.5 336.5 964.9 348.4 967.3 356.3C969.7 364.2 971.2 372.7 972.5 380.0C973.8 387.3 974.1 394.7 974.8 400.0C975.5 405.3 976.2 410.0 976.5 412.0" stroke-width="3.2"/><path d="M957.0 313.5C958.7 313.4 963.8 312.2 967.0 313.2C970.2 314.2 973.2 316.5 976.0 319.5C978.8 322.5 981.7 326.8 984.0 331.0C986.3 335.2 988.0 340.7 990.0 345.0C992.0 349.3 995.0 355.0 996.0 357.0" stroke-width="4"/></g><g fill="none" stroke="#fff" stroke-linecap="round" stroke-linejoin="round" filter="url(#gl2)"><g stroke-width="1.8"><path d="M932.0 317.0C933.5 317.4 938.0 318.4 941.0 319.5C944.0 320.6 948.2 323.1 949.7 323.8"/><path d="M954.3 309.6C956.4 309.4 962.8 307.7 966.8 308.5C970.8 309.3 975.0 311.7 978.2 314.2C981.4 316.7 984.1 319.9 986.2 323.3C988.3 326.7 989.2 330.9 990.7 334.7C992.2 338.5 993.6 342.2 995.3 346.0C997.0 349.8 1000.0 355.5 1001.0 357.4"/><path d="M956.6 317.6C957.3 318.9 959.7 323.1 961.0 325.6C962.3 328.1 964.7 331.0 964.5 332.4C964.3 333.8 960.8 333.7 960.0 334.0"/><path d="M940.6 325.6C941.7 328.6 945.3 337.7 947.4 343.8C949.5 349.9 951.6 356.3 953.1 362.0C954.6 367.7 955.8 372.7 956.6 378.0C957.4 383.3 957.2 389.2 957.7 393.9C958.2 398.6 958.1 400.7 959.5 406.0C960.9 411.3 963.2 420.1 966.0 425.5C968.8 430.9 972.1 433.9 976.4 438.5C980.7 443.1 987.2 448.7 992.0 452.8C996.8 456.9 1001.8 461.2 1005.0 463.2C1008.2 465.2 1010.0 464.7 1011.0 465.0"/><path d="M961.1 331.3C962.6 334.9 967.9 345.1 970.2 352.9C972.5 360.7 973.6 371.2 974.8 378.0C975.9 384.8 976.7 391.2 977.1 393.9"/><path d="M994.1 359.7C992.4 361.6 985.0 367.3 983.9 371.1C982.8 374.9 987.4 379.0 987.3 382.5C987.1 386.0 984.5 389.8 983.0 392.0C981.5 394.2 978.8 395.3 978.0 396.0"/><path d="M1002.0 386.0C1004.7 388.2 1013.2 394.0 1018.0 399.5C1022.8 405.0 1027.1 411.9 1031.0 419.0C1034.9 426.1 1038.2 434.6 1041.5 442.4C1044.8 450.2 1047.6 458.2 1050.6 465.8C1053.6 473.4 1056.5 481.7 1059.7 488.0C1062.9 494.3 1064.8 497.8 1070.0 503.6C1075.2 509.4 1087.4 519.8 1090.9 523.0"/><path d="M1002.0 384.0C1005.0 386.2 1013.7 393.9 1020.0 397.0C1026.3 400.1 1033.7 402.0 1040.0 402.5C1046.3 403.0 1055.0 400.4 1058.0 400.0"/><path d="M978.0 396.0C976.7 398.8 975.6 412.1 976.4 419.0C977.2 425.9 979.9 431.6 982.9 437.2C985.9 442.8 990.9 448.7 994.6 452.8C998.3 456.9 1002.8 460.8 1005.0 462.0C1007.2 463.2 1008.0 462.0 1008.0 460.0C1008.0 458.0 1006.1 454.9 1005.0 450.2C1003.9 445.5 1002.8 438.3 1001.1 432.0C999.4 425.7 997.5 417.5 994.6 412.5C991.8 407.5 986.8 404.8 984.0 402.0C981.2 399.2 979.3 393.2 978.0 396.0Z"/><path d="M1001.1 413.8C1000.9 416.5 1003.5 425.5 1005.0 432.0C1006.5 438.5 1008.0 446.7 1010.2 452.8C1012.4 458.9 1015.6 464.7 1018.0 468.4C1020.4 472.1 1022.7 474.2 1024.5 475.0C1026.3 475.8 1028.1 475.0 1028.6 473.0C1029.0 471.0 1028.1 467.4 1027.2 463.2C1026.3 459.0 1025.2 453.2 1023.2 447.6C1021.2 442.0 1018.3 434.7 1015.4 429.4C1012.5 424.1 1008.4 418.6 1006.0 416.0C1003.6 413.4 1001.3 411.1 1001.1 413.8Z"/><path d="M1025.8 442.4C1025.7 444.8 1027.5 454.1 1029.7 460.6C1031.9 467.1 1035.6 475.6 1038.9 481.5C1042.2 487.4 1046.7 492.6 1049.3 495.8C1051.9 499.1 1053.2 500.8 1054.5 501.0C1055.8 501.2 1058.1 499.8 1057.4 497.0C1056.8 494.2 1053.2 489.4 1050.6 484.0C1047.9 478.6 1044.8 470.8 1041.5 464.5C1038.2 458.2 1033.1 449.7 1030.5 446.0C1027.9 442.3 1025.9 440.0 1025.8 442.4Z"/></g><g stroke-width="2.3"><path d="M1008.0 372.0C1014.1 368.7 1034.1 360.5 1046.6 356.0C1059.1 351.5 1071.0 348.4 1083.2 345.0C1095.4 341.6 1111.1 337.8 1119.8 335.5C1128.5 333.2 1133.6 330.5 1135.6 331.0C1137.6 331.5 1134.6 334.4 1132.0 338.3C1129.4 342.2 1124.7 349.4 1119.8 354.1C1114.9 358.8 1108.4 363.2 1102.7 366.3C1097.0 369.4 1092.9 371.2 1085.6 372.4C1078.3 373.6 1067.3 373.5 1058.8 373.7C1050.3 373.9 1042.5 373.3 1034.4 373.7C1026.3 374.1 1014.4 376.3 1010.0 376.0C1005.6 375.7 1001.9 375.3 1008.0 372.0Z"/><path d="M1010.0 379.0C1017.1 378.9 1036.4 379.6 1046.6 379.5C1056.8 379.4 1064.9 379.1 1071.0 378.5C1077.1 377.9 1082.6 375.2 1083.0 376.0C1083.4 376.8 1076.4 380.9 1073.4 383.4C1070.4 385.8 1068.4 388.7 1064.9 390.7C1061.5 392.7 1057.8 395.0 1052.7 395.6C1047.6 396.2 1040.5 395.8 1034.4 394.4C1028.3 393.0 1021.1 389.4 1016.0 387.0C1010.9 384.6 1005.0 381.3 1004.0 380.0C1003.0 378.7 1002.9 379.1 1010.0 379.0Z"/></g><g stroke-width="1.6" opacity="0.85"><path d="M998.0 366.0C1001.0 363.0 1014.1 359.5 1022.2 354.1C1030.3 348.7 1036.4 339.9 1046.6 333.4C1056.8 326.9 1071.0 320.4 1083.2 315.1C1095.4 309.8 1107.6 305.4 1119.8 301.7C1132.0 297.9 1147.4 294.5 1156.3 292.6C1165.2 290.7 1169.5 290.1 1173.4 290.1C1177.3 290.1 1178.9 291.6 1179.5 292.8C1180.1 294.0 1179.9 294.4 1177.1 297.5C1174.2 300.6 1168.3 306.8 1162.4 311.5C1156.5 316.2 1148.8 322.1 1141.7 325.5C1134.6 328.9 1129.5 329.4 1119.8 332.2C1110.0 334.9 1095.4 338.6 1083.2 342.0C1071.0 345.4 1056.8 349.4 1046.6 352.9C1036.4 356.3 1029.3 359.5 1022.2 362.7C1015.1 365.9 1008.0 371.4 1004.0 372.0C1000.0 372.6 995.0 369.0 998.0 366.0Z"/></g><path d="M880.3 297.7C884.4 298.5 897.5 301.2 905.0 302.5C912.5 303.8 918.7 304.6 925.0 305.5C931.3 306.4 938.0 307.5 942.9 308.2C947.8 308.9 952.4 309.4 954.3 309.6" stroke-width="1.2" opacity="0.8"/></g><g stroke="#fff" stroke-width="1.2" opacity="0.8" fill="none" filter="url(#gl2)"><path d="M1000 370L1060 349M1000 372L1062 362M1000 374L1058 372.5M1000 377L1050 385M999 380L1030 395"/></g><path d="M1055.0 499.0L1090.9 523.0L1066.0 499.0Z" fill="#fff" filter="url(#gl2)"/><path d="M17.3 759.8L24.7 767.2M24.7 759.8L17.3 767.2" fill="none" stroke="#8c8c8c" stroke-width="1.3" stroke-linecap="butt" stroke-linejoin="miter"/><rect x="115.2" y="758.4" width="11.6" height="1.6" rx="0" fill="#c2c2c2" stroke="none" stroke-width="0" /><rect x="115.2" y="762.8" width="11.6" height="1.6" rx="0" fill="#b6b6b6" stroke="none" stroke-width="0" /><rect x="115.2" y="767.1" width="11.6" height="1.6" rx="0" fill="#a4a4a4" stroke="none" stroke-width="0" /><circle cx="166.6" cy="803.6" r="4.7" fill="none" stroke="#c0c0c0" stroke-width="1.5" /><path d="M163.4 807.4L157.6 813.2" fill="none" stroke="#c0c0c0" stroke-width="1.8" stroke-linecap="round" stroke-linejoin="round"/><path d="M171 809.4H177.6L174.3 812.8Z" fill="#c0c0c0" stroke="none" stroke-width="0" /><path d="M548.8 802.8L551.8 801V804.6Z" fill="#b4b4b4" stroke="none" stroke-width="0" /><rect x="551.6" y="801" width="5.4" height="3.6" rx="0" fill="#b4b4b4" stroke="none" stroke-width="0" /><rect x="565" y="801" width="5.6" height="3.8" rx="0" fill="#b4b4b4" stroke="none" stroke-width="0" /><rect x="565" y="808.2" width="5.6" height="3.8" rx="0" fill="#b4b4b4" stroke="none" stroke-width="0" /><path d="M557 802.8H565M561 802.8V810H565" fill="none" stroke="#b4b4b4" stroke-width="1.3" stroke-linecap="butt" stroke-linejoin="miter"/><path d="M567 814.2H573.6L570.3 817.8Z" fill="#b4b4b4" stroke="none" stroke-width="0" /><rect x="597.8" y="809.2" width="23.2" height="6.6" rx="0" fill="#4c4c4c" stroke="none" stroke-width="0" /><path d="M602.2 806C602.2 796.4 616 796.4 616 806H611V812.4C611 814.8 607.2 814.8 607.2 812.4V806Z" fill="#b4b4b4" stroke="none" stroke-width="0" /><circle cx="606.2" cy="802.6" r="1.6" fill="#282828" stroke="none" stroke-width="0" /><circle cx="612" cy="802.6" r="1.6" fill="#282828" stroke="none" stroke-width="0" /><path d="M599.2 806H603M615 806H619.6M599.4 804V806M619.4 804V806" fill="none" stroke="#b4b4b4" stroke-width="1.3" stroke-linecap="butt" stroke-linejoin="miter"/><rect x="636.6" y="801.8" width="13.6" height="15.6" rx="0" fill="#b4b4b4" stroke="none" stroke-width="0" /><rect x="641.8" y="796.6" width="15.6" height="17" rx="0" fill="#282828" stroke="none" stroke-width="0" /><rect x="642.6" y="797.4" width="14.2" height="15.4" rx="0" fill="#b4b4b4" stroke="none" stroke-width="0" /><path d="M644.6 799V812M654.8 799V812" fill="none" stroke="#2a2a2a" stroke-width="1.1" stroke-dasharray="1.2 1.6"/><path d="M647 805.2H652.4" fill="none" stroke="#2a2a2a" stroke-width="1.5" stroke-linecap="butt" stroke-linejoin="miter"/><path d="M638.6 804V815" fill="none" stroke="#2a2a2a" stroke-width="1.1" stroke-dasharray="1.2 1.6"/><circle cx="681.5" cy="811.2" r="6.3" fill="#282828" stroke="#b4b4b4" stroke-width="1.4" /><circle cx="684.5" cy="808" r="6.3" fill="#282828" stroke="#b4b4b4" stroke-width="1.4" /><circle cx="687.5" cy="804.6" r="6.3" fill="#4a4a4a" stroke="#b4b4b4" stroke-width="1.5" /><rect x="723.4" y="799.8" width="20.8" height="17.2" rx="0" fill="none" stroke="#b4b4b4" stroke-width="1.5" /><path d="M727.8 797V799.8M732 796V799.8M736.2 797V799.8M740.4 796V799.8M721.2 804H723.4M721.2 808.6H723.4M721.2 813.2H723.4" fill="none" stroke="#b4b4b4" stroke-width="1.2" stroke-linecap="butt" stroke-linejoin="miter"/><path d="M726.2 803.4C733 803.4 732 813 741 812.8" fill="none" stroke="#b4b4b4" stroke-width="1.4" stroke-linecap="round" stroke-linejoin="round"/><path d="M10.799999999999999 848.4C14.399999999999999 842.4 22.4 842.4 26.0 848.4C22.4 854.4 14.399999999999999 854.4 10.799999999999999 848.4Z" fill="#c0c0c0" stroke="none" stroke-width="0" /><circle cx="18.599999999999998" cy="848.1999999999999" r="2.7" fill="#2a2a2a" stroke="none" stroke-width="0" /><circle cx="19.4" cy="847.3" r="0.8" fill="#c0c0c0" stroke="none" stroke-width="0" /><path d="M31 845.4H34.6L39.6 840.8V856.2L34.6 851.6H31Z" fill="#b8b8b8" stroke="none" stroke-width="0" /><path d="M41.6 844.6C43.8 846.6 43.8 850.6 41.6 852.6M43 841.2C48.6 845 48.6 852.2 43 856" fill="none" stroke="#b8b8b8" stroke-width="1.4" stroke-linecap="round" stroke-linejoin="round"/><circle cx="61" cy="848.6" r="5.3" fill="#b8b8b8" stroke="none" stroke-width="0" /><path d="M76 847.4H89.2V855.2H76ZM82.6 849.4C81.2 849.4 81 851 81.8 851.6L81.4 853.6H83.8L83.4 851.6C84.2 851 84 849.4 82.6 849.4Z" fill="#b8b8b8" stroke="none" stroke-width="0" fill-rule="evenodd"/><path d="M78.6 847.6V845C78.6 839.8 86.6 839.8 86.6 845V847.6" fill="none" stroke="#b8b8b8" stroke-width="1.7" stroke-linecap="butt" stroke-linejoin="miter"/><path d="M120 841L127 839.6L137.2 849.6L129.8 857L119.8 847Z" fill="#b8b8b8" stroke="none" stroke-width="0" /><circle cx="123.2" cy="843.4" r="1.4" fill="#282828" stroke="none" stroke-width="0" /><path d="M389.8 850.7C389.8 839.1 402.40000000000003 839.1 402.40000000000003 850.7H397.8V853.7C397.8 855.3000000000001 394.40000000000003 855.3000000000001 394.40000000000003 853.7V850.7Z" fill="#b4b4b4" stroke="none" stroke-width="0" /><circle cx="393.6" cy="846.1" r="1.5" fill="#282828" stroke="none" stroke-width="0" /><circle cx="398.6" cy="846.1" r="1.5" fill="#282828" stroke="none" stroke-width="0" /><path d="M387.5 851.7H393.1M399.1 851.7H404.70000000000005" fill="none" stroke="#b4b4b4" stroke-width="1.3" stroke-linecap="butt" stroke-linejoin="miter"/><circle cx="417.4" cy="848.6" r="2.6" fill="none" stroke="#b4b4b4" stroke-width="1.3" /><path d="M421.30 848.60L424.60 848.60M420.16 851.36L422.49 853.69M417.40 852.50L417.40 855.80M414.64 851.36L412.31 853.69M413.50 848.60L410.20 848.60M414.64 845.84L412.31 843.51M417.40 844.70L417.40 841.40M420.16 845.84L422.49 843.51" fill="none" stroke="#b4b4b4" stroke-width="1.2" stroke-linecap="butt" stroke-linejoin="miter"/><path d="M432.4 841.8L445.4 854.4" fill="none" stroke="#b4b4b4" stroke-width="2.2" stroke-dasharray="2 1.3" stroke-linecap="butt"/><g transform="translate(452.4 853.2) scale(1.0)"><path d="M0.2 3.2C2.2 3.6 3 2.6 3.4 0.6L5.6 -11.4C6.2 -14.4 8 -15 10.4 -14.2" fill="none" stroke="#b4b4b4" stroke-width="1.5" stroke-linecap="butt"/><path d="M3 -8.6H9" stroke="#b4b4b4" stroke-width="1.3"/><path d="M8 -8.4C9.6 -8.6 10 -7.6 10.6 -6.4L13.6 -1.4C14.2 -0.4 14.8 0.2 16 -0.2M7 -0.2L16.2 -8.6" fill="none" stroke="#b4b4b4" stroke-width="1.5" stroke-linecap="butt"/></g><rect x="474.4" y="840.8" width="15.4" height="12.6" rx="0" fill="#b4b4b4" stroke="none" stroke-width="0" /><path d="M476 842V852.6M488.2 842V852.6" fill="none" stroke="#2a2a2a" stroke-width="1" stroke-dasharray="1 1.4"/><path d="M479 847H485.4" fill="none" stroke="#2a2a2a" stroke-width="1.5" stroke-linecap="butt" stroke-linejoin="miter"/><path d="M472.8 843.6V856H487" fill="none" stroke="#b4b4b4" stroke-width="1.2" stroke-linecap="butt" stroke-linejoin="miter"/><circle cx="501" cy="851" r="5.6" fill="#282828" stroke="#a8a8a8" stroke-width="1.2" /><circle cx="503.6" cy="848.4" r="5.6" fill="#282828" stroke="#a8a8a8" stroke-width="1.2" /><circle cx="506.6" cy="845.8" r="6.2" fill="#6e6e6e" stroke="#a0a0a0" stroke-width="1" /><circle cx="525.2" cy="848.6" r="6.7" fill="none" stroke="#b4b4b4" stroke-width="1.4" /><path d="M530.1 843.7A6.9 6.9 0 0 1 520.3000000000001 853.5Z" fill="#b4b4b4" stroke="none" stroke-width="0" /><path d="M547.2 842.2L553.4 845.2V851.8L547.2 855L541 851.8V845.2ZM541 845.2L547.2 848.4L553.4 845.2M547.2 848.4V855" fill="none" stroke="#b4b4b4" stroke-width="1.3" stroke-linecap="round" stroke-linejoin="round"/><path d="M10.799999999999999 873.1C14.399999999999999 867.1 22.4 867.1 26.0 873.1C22.4 879.1 14.399999999999999 879.1 10.799999999999999 873.1Z" fill="#c6c6c6" stroke="none" stroke-width="0" /><circle cx="18.599999999999998" cy="872.9" r="2.7" fill="#333" stroke="none" stroke-width="0" /><circle cx="19.4" cy="872.0" r="0.8" fill="#c6c6c6" stroke="none" stroke-width="0" /><path d="M109.5 869.4L114.3 874.4L109.5 879.4" fill="none" stroke="#b0b0b0" stroke-width="1.4" stroke-linecap="butt" stroke-linejoin="miter"/><path d="M389.8 875.9C389.8 864.3 402.40000000000003 864.3 402.40000000000003 875.9H397.8V878.9C397.8 880.5 394.40000000000003 880.5 394.40000000000003 878.9V875.9Z" fill="#b4b4b4" stroke="none" stroke-width="0" /><circle cx="393.6" cy="871.3" r="1.5" fill="#383838" stroke="none" stroke-width="0" /><circle cx="398.6" cy="871.3" r="1.5" fill="#383838" stroke="none" stroke-width="0" /><path d="M387.5 876.9H393.1M399.1 876.9H404.70000000000005" fill="none" stroke="#b4b4b4" stroke-width="1.3" stroke-linecap="butt" stroke-linejoin="miter"/><path d="M432.4 880.9L445.8 866.5" fill="none" stroke="#b4b4b4" stroke-width="1.6" stroke-linecap="butt" stroke-linejoin="miter"/><path d="M592.9 873.9C591.0999999999999 874.5 589.9 872.1 591.9 870.7C594.6999999999999 869.1 597.6999999999999 872.5 596.0999999999999 875.9C593.9 879.9 587.0999999999999 878.9 585.6999999999999 873.9C584.5 869.5 588.3 865.5 592.9 865.9M599.9 867.5C601.6999999999999 872.5 600.3 879.5 593.3 881.1" fill="none" stroke="#a4a4a4" stroke-width="1.4" stroke-linecap="round" stroke-linejoin="round"/><path d="M721.8 870.6999999999999L727 875.9L732.2 870.6999999999999" fill="none" stroke="#c8c8c8" stroke-width="1.5" stroke-linecap="butt" stroke-linejoin="miter"/><path d="M10.799999999999999 897.1C14.399999999999999 891.1 22.4 891.1 26.0 897.1C22.4 903.1 14.399999999999999 903.1 10.799999999999999 897.1Z" fill="#c6c6c6" stroke="none" stroke-width="0" /><circle cx="18.599999999999998" cy="896.9" r="2.7" fill="#1c1c1c" stroke="none" stroke-width="0" /><circle cx="19.4" cy="896.0" r="0.8" fill="#c6c6c6" stroke="none" stroke-width="0" /><path d="M109.5 893.4L114.3 898.4L109.5 903.4" fill="none" stroke="#b0b0b0" stroke-width="1.4" stroke-linecap="butt" stroke-linejoin="miter"/><path d="M389.8 899.9C389.8 888.3 402.40000000000003 888.3 402.40000000000003 899.9H397.8V902.9C397.8 904.5 394.40000000000003 904.5 394.40000000000003 902.9V899.9Z" fill="#b4b4b4" stroke="none" stroke-width="0" /><circle cx="393.6" cy="895.3" r="1.5" fill="#1e1e1e" stroke="none" stroke-width="0" /><circle cx="398.6" cy="895.3" r="1.5" fill="#1e1e1e" stroke="none" stroke-width="0" /><path d="M387.5 900.9H393.1M399.1 900.9H404.70000000000005" fill="none" stroke="#b4b4b4" stroke-width="1.3" stroke-linecap="butt" stroke-linejoin="miter"/><path d="M432.4 904.9L445.8 890.5" fill="none" stroke="#b4b4b4" stroke-width="1.6" stroke-linecap="butt" stroke-linejoin="miter"/><path d="M592.9 897.9C591.0999999999999 898.5 589.9 896.1 591.9 894.7C594.6999999999999 893.1 597.6999999999999 896.5 596.0999999999999 899.9C593.9 903.9 587.0999999999999 902.9 585.6999999999999 897.9C584.5 893.5 588.3 889.5 592.9 889.9M599.9 891.5C601.6999999999999 896.5 600.3 903.5 593.3 905.1" fill="none" stroke="#a4a4a4" stroke-width="1.4" stroke-linecap="round" stroke-linejoin="round"/><path d="M721.8 894.6999999999999L727 899.9L732.2 894.6999999999999" fill="none" stroke="#c8c8c8" stroke-width="1.5" stroke-linecap="butt" stroke-linejoin="miter"/><g transform="translate(452.4 877.6) scale(1.0)"><path d="M0.2 3.2C2.2 3.6 3 2.6 3.4 0.6L5.6 -11.4C6.2 -14.4 8 -15 10.4 -14.2" fill="none" stroke="#b4b4b4" stroke-width="1.5" stroke-linecap="butt"/><path d="M3 -8.6H9" stroke="#b4b4b4" stroke-width="1.3"/><path d="M8 -8.4C9.6 -8.6 10 -7.6 10.6 -6.4L13.6 -1.4C14.2 -0.4 14.8 0.2 16 -0.2M7 -0.2L16.2 -8.6" fill="none" stroke="#b4b4b4" stroke-width="1.5" stroke-linecap="butt"/></g><circle cx="525.2" cy="873.2" r="6.7" fill="none" stroke="#b4b4b4" stroke-width="1.4" /><path d="M530.1 868.3000000000001A6.9 6.9 0 0 1 520.3000000000001 878.1Z" fill="#b4b4b4" stroke="none" stroke-width="0" /><circle cx="417.4" cy="897.4" r="2.6" fill="none" stroke="#9c9c9c" stroke-width="1.1" /><path d="M421.30 897.40L424.60 897.40M420.16 900.16L422.49 902.49M417.40 901.30L417.40 904.60M414.64 900.16L412.31 902.49M413.50 897.40L410.20 897.40M414.64 894.64L412.31 892.31M417.40 893.50L417.40 890.20M420.16 894.64L422.49 892.31" fill="none" stroke="#9c9c9c" stroke-width="1" stroke-linecap="butt" stroke-linejoin="miter"/><path d="M206.30 889.80L208.36 895.57L214.48 895.74L209.63 899.48L211.35 905.36L206.30 901.90L201.25 905.36L202.97 899.48L198.12 895.74L204.24 895.57Z" fill="#c0c0c0" stroke="none" stroke-width="0" /><path d="M1980.2 836.4H1996V849L1988.1 856.2L1980.2 849Z" fill="#b0b0b0" stroke="none" stroke-width="0" /><path d="M1986.6 868.6H1996V878.4H1988" fill="#b4b4b4" stroke="none" stroke-width="0" /><path d="M1988.4 866.2L1977.6 877.6H1984" fill="none" stroke="#b4b4b4" stroke-width="1.4" stroke-linecap="round" stroke-linejoin="round"/><circle cx="1986.2" cy="878.8" r="3.9" fill="#282828" stroke="#b4b4b4" stroke-width="1.4" /><rect x="13.6" y="1208.8" width="9.6" height="9.4" rx="1.5" fill="#282828" stroke="#2d8ceb" stroke-width="1.5" /><rect x="16.6" y="1211.8" width="9.6" height="9.4" rx="1.5" fill="#282828" stroke="#2d8ceb" stroke-width="1.5" /><rect x="19.6" y="1214.8" width="9.2" height="9" rx="1.5" fill="#1a1a1a" stroke="#2d8ceb" stroke-width="1.5" /><circle cx="24.2" cy="1219.4" r="1.6" fill="#2d8ceb" stroke="none" stroke-width="0" /><circle cx="46.2" cy="1212.9" r="5.7" fill="none" stroke="#b4b4b4" stroke-width="1.4" /><rect x="46.6" y="1213.4" width="9.4" height="9.4" rx="0" fill="none" stroke="#b4b4b4" stroke-width="1.4" /><path d="M46.6 1213.4H51.9C51.6 1216.6 49.4 1218.4 46.6 1218.6Z" fill="#b4b4b4" stroke="none" stroke-width="0" /><rect x="72.6" y="1208" width="5.4" height="14.6" rx="0" fill="#484848" stroke="none" stroke-width="0" /><path d="M72.2 1207.8C69.6 1207.8 71 1214.6 67.8 1215.2C71 1215.8 69.6 1222.6 72.2 1222.6M78.6 1207.8C81.2 1207.8 79.8 1214.6 83 1215.2C79.8 1215.8 81.2 1222.6 78.6 1222.6" fill="none" stroke="#b4b4b4" stroke-width="1.9" stroke-linecap="butt" stroke-linejoin="miter"/><circle cx="99.6" cy="1214.4" r="5.7" fill="#b4b4b4" stroke="none" stroke-width="0" /><path d="M93.6 1220.2C98 1219 104 1219.4 106 1215.6L109.4 1219.6L110 1221.8H93.6Z" fill="#b4b4b4" stroke="none" stroke-width="0" /><path d="M105.6 1217.4L107 1211.6M107.6 1218L110.6 1212.6" fill="none" stroke="#b4b4b4" stroke-width="1.2" stroke-linecap="round" stroke-linejoin="round"/><circle cx="107" cy="1211.2" r="1.2" fill="#b4b4b4" stroke="none" stroke-width="0" /><circle cx="110.8" cy="1212.2" r="1.2" fill="#b4b4b4" stroke="none" stroke-width="0" /><path d="M776.4 1219.6L780.4 1213.6L783.4 1216.6L785.4 1214.6L790 1219.6Z" fill="#b4b4b4" stroke="none" stroke-width="0" /><circle cx="813" cy="1217.6" r="5.2" fill="#282828" stroke="#c6c6c6" stroke-width="1.8" /><path d="M819 1217.6H875" fill="none" stroke="#444" stroke-width="1.5" stroke-linecap="butt" stroke-linejoin="miter"/><path d="M892 1221L900.4 1210.4L904.4 1215L907.4 1211.6L916 1221Z" fill="#b4b4b4" stroke="none" stroke-width="0" /><path d="M0 1230V1219C0 1226 4 1230 11 1230Z" fill="#0c0c0c"/><path d="M1633.4 277.6L958 848.8" stroke="#08f212" stroke-width="5.0" stroke-linecap="round" fill="none"/><path d="M931.8 873L954.6 843L965.4 854.8Z" fill="#08f212"/><circle cx="1734.6" cy="17.8" r="5.8" fill="none" stroke="#b4b4b4" stroke-width="1.6"/><path d="M1730.6 22L1725 27.2" stroke="#b4b4b4" stroke-width="2.2" stroke-linecap="round"/></svg>
</div></body></html>
